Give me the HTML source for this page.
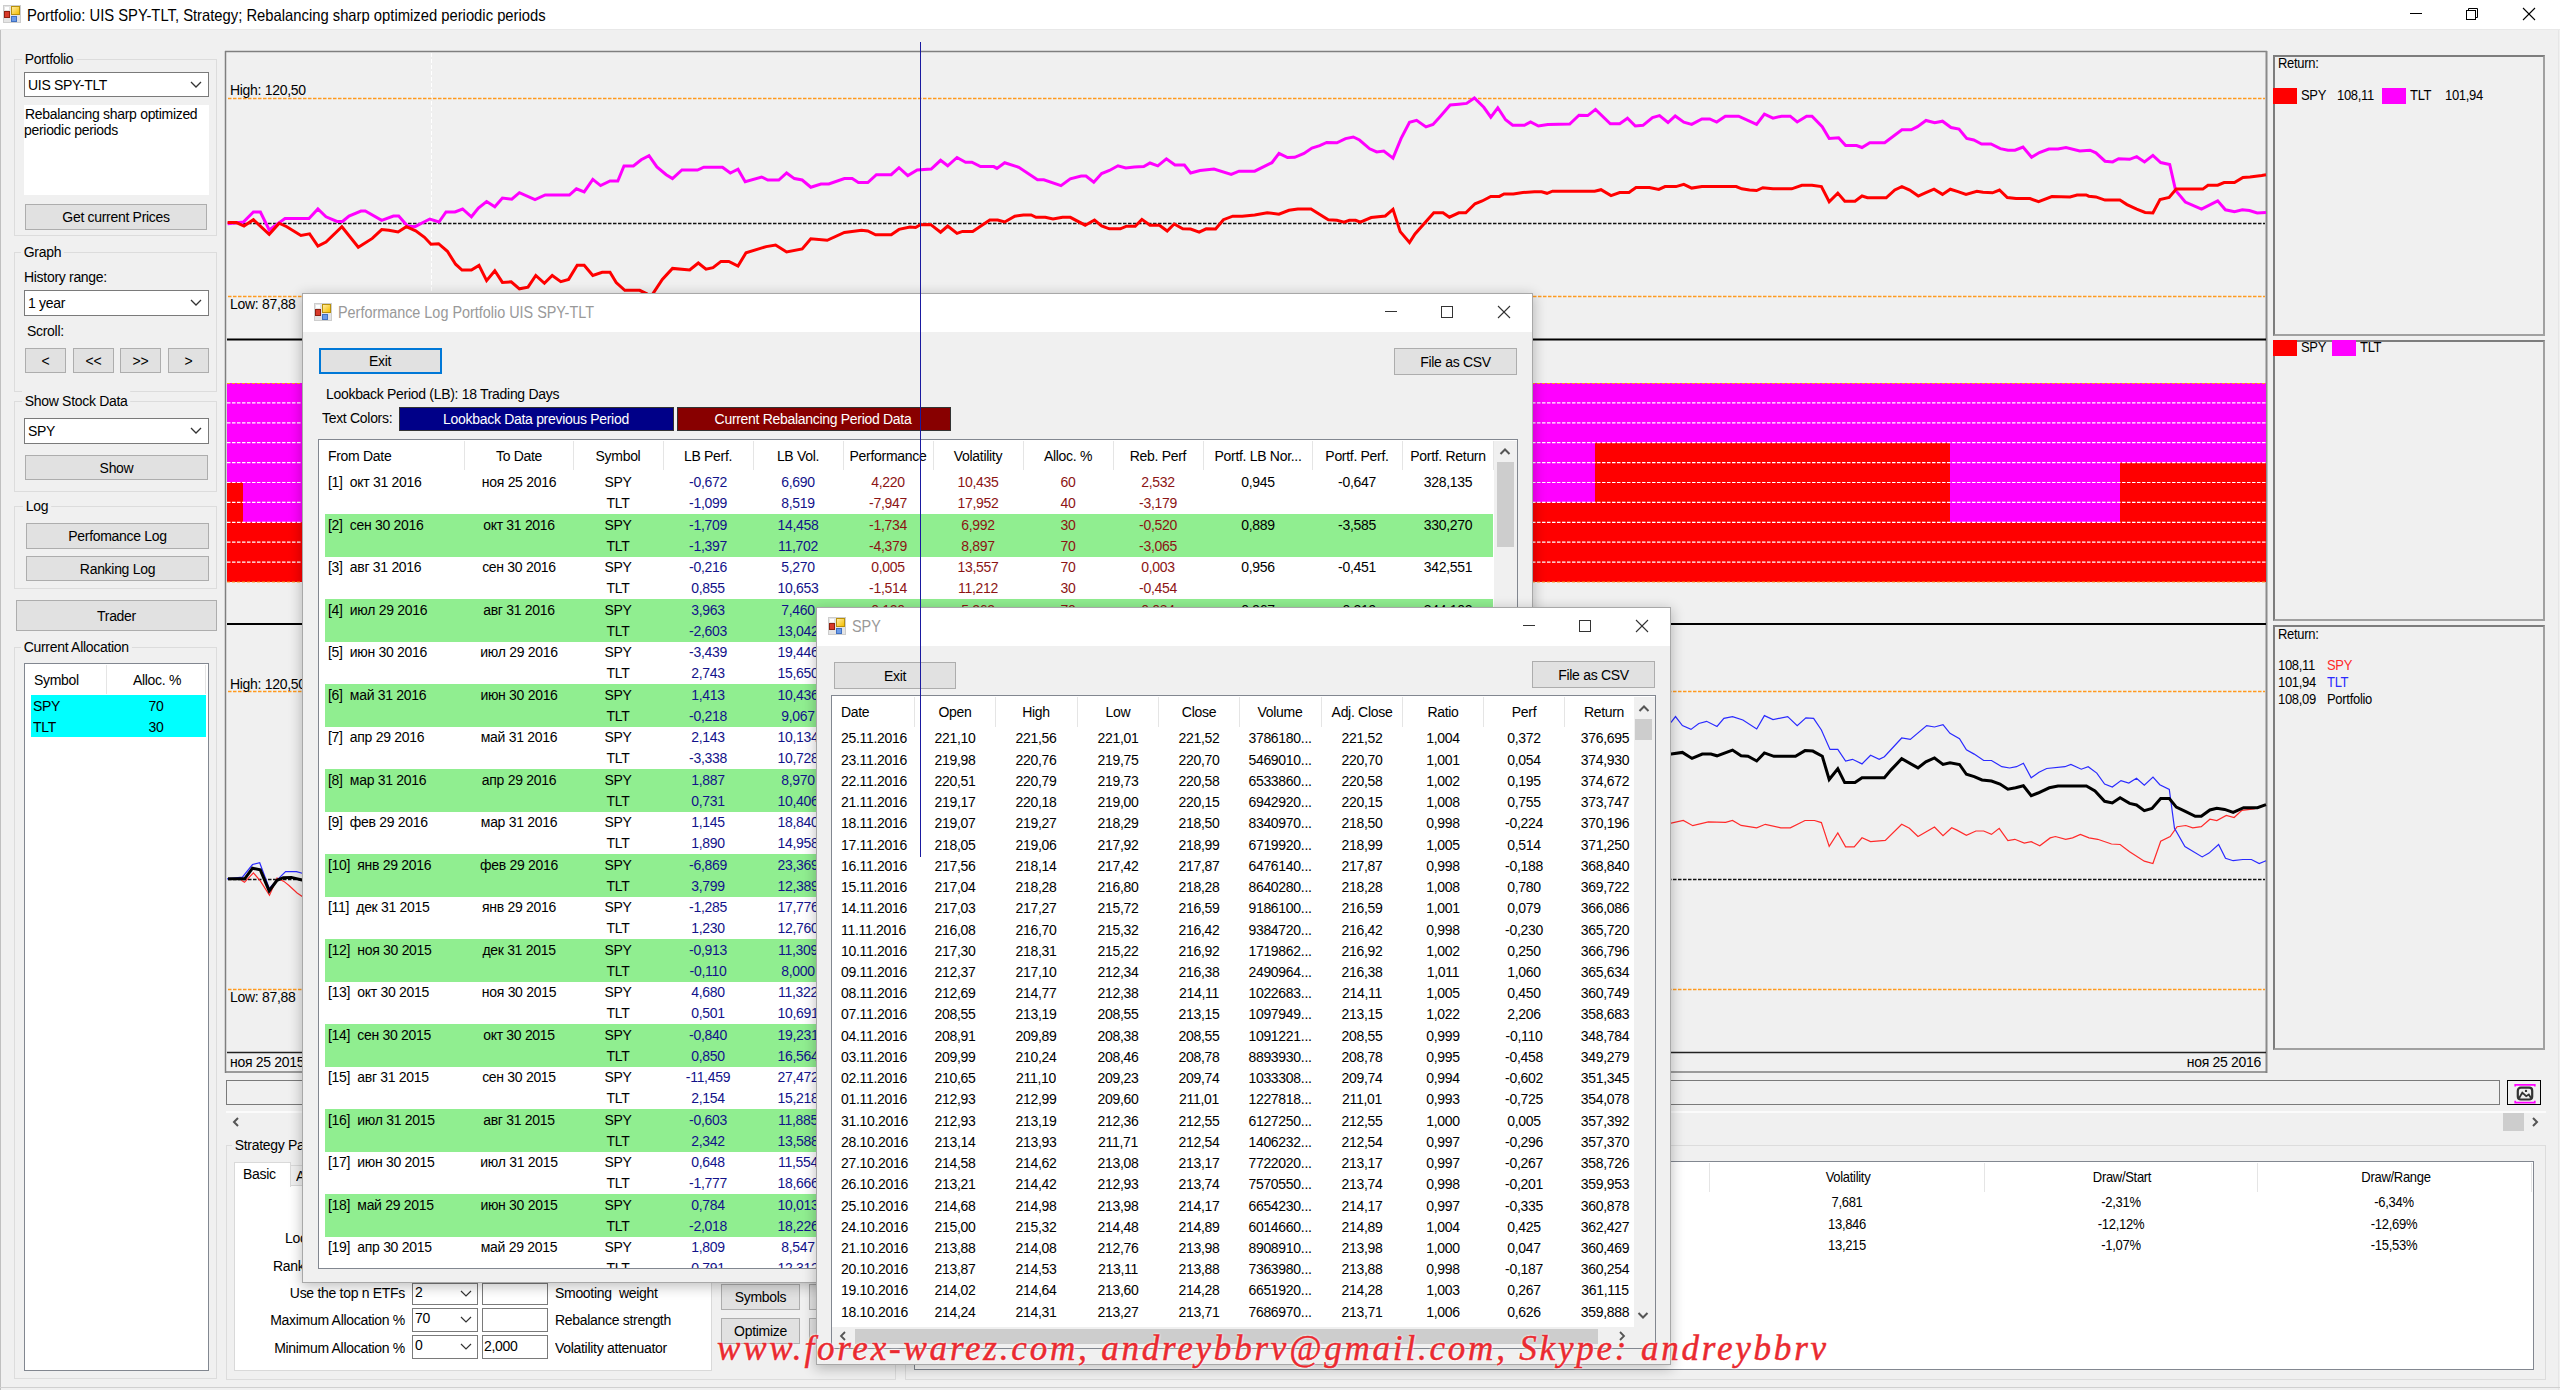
<!DOCTYPE html><html><head><meta charset="utf-8"><style>
html,body{margin:0;padding:0;}
body{width:2560px;height:1390px;overflow:hidden;position:relative;background:#f0f0f0;font-family:'Liberation Sans',sans-serif;font-size:14px;color:#000;}
.a{position:absolute;}
.t{position:absolute;white-space:pre;}
</style></head><body>
<div class="a" style="left:0px;top:0px;width:2560px;height:29px;background:#fff;"></div>
<div class="a" style="left:0px;top:29px;width:2560px;height:1px;background:#e8e8e8;"></div>
<div class="a" style="left:3px;top:5px;width:18px;height:18px;background:#e4e4e4;border:1px solid #cdcdcd;box-sizing:border-box;"></div>
<div class="a" style="left:5px;top:7px;width:4px;height:3px;background:#fff;"></div>
<div class="a" style="left:11px;top:6px;width:9px;height:9px;background:linear-gradient(135deg,#ffeaa0,#f5c000);border:1px solid #b8900a;box-sizing:border-box;"></div>
<div class="a" style="left:4px;top:11px;width:6px;height:7px;background:#d83a2a;border:1px solid #902010;box-sizing:border-box;"></div>
<div class="a" style="left:11px;top:16px;width:6px;height:6px;background:#6a9ae8;border:1px solid #4070c0;box-sizing:border-box;"></div>
<div class="t" style="top:4.8px;line-height:20px;font-size:16.28px;color:#000;letter-spacing:0.00px;left:27.0px;transform:scaleX(0.9091);transform-origin:left center;">Portfolio: UIS SPY-TLT, Strategy; Rebalancing sharp optimized periodic periods</div>
<svg class="a" style="left:2400px;top:0px" width="160" height="30"><line x1="10" y1="13.5" x2="22" y2="13.5" stroke="#000" stroke-width="1"/><rect x="66.5" y="10.5" width="9" height="9" fill="none" stroke="#000" stroke-width="1"/><polyline points="68.5,10.5 68.5,8.5 77.5,8.5 77.5,17.5 75.5,17.5" fill="none" stroke="#000" stroke-width="1"/><line x1="123" y1="8" x2="135" y2="20" stroke="#000" stroke-width="1.1"/><line x1="135" y1="8" x2="123" y2="20" stroke="#000" stroke-width="1.1"/></svg>
<div class="a" style="left:0px;top:30px;width:1px;height:1360px;background:#c0c0c0;"></div>
<div class="a" style="left:2558px;top:30px;width:1px;height:1360px;background:#e6e6e6;"></div>
<div class="a" style="left:0px;top:1387px;width:2560px;height:1px;background:#d0d0d0;"></div>
<div class="a" style="left:14px;top:59px;width:203px;height:177px;border:1px solid #dcdcdc;box-sizing:border-box;"></div>
<div class="t" style="top:49.3px;line-height:19px;font-size:15.40px;color:#000;letter-spacing:-0.33px;left:22.0px;transform:scaleX(0.9091);transform-origin:left center;background:#f0f0f0;padding:0 3px;">Portfolio</div>
<div class="a" style="left:24px;top:72px;width:185px;height:25px;background:#fff;border:1px solid #7a7a7a;box-sizing:border-box;"></div>
<div class="t" style="top:74.8px;line-height:19px;font-size:15.40px;color:#000;letter-spacing:-0.33px;left:28.0px;transform:scaleX(0.9091);transform-origin:left center;">UIS SPY-TLT</div>
<svg class="a" style="left:189px;top:79.5px" width="14" height="10"><polyline points="2,2 7,7 12,2" fill="none" stroke="#333" stroke-width="1.3"/></svg>
<div class="a" style="left:24px;top:105px;width:185px;height:90px;background:#fff;"></div>
<div class="t" style="top:104.3px;line-height:19px;font-size:15.40px;color:#000;letter-spacing:-0.33px;left:25.0px;transform:scaleX(0.9091);transform-origin:left center;">Rebalancing sharp optimized</div>
<div class="t" style="top:120.3px;line-height:19px;font-size:15.40px;color:#000;letter-spacing:-0.33px;left:24.0px;transform:scaleX(0.9091);transform-origin:left center;">periodic periods</div>
<div class="a" style="left:25px;top:204px;width:182px;height:26px;background:#e1e1e1;border:1px solid #adadad;box-sizing:border-box;"></div>
<div class="t" style="top:207.3px;line-height:19px;font-size:15.40px;color:#000;letter-spacing:-0.33px;left:5.0px;width:222px;text-align:center;transform:scaleX(0.9091);transform-origin:center center;">Get current Prices</div>
<div class="a" style="left:14px;top:252px;width:203px;height:140px;border:1px solid #dcdcdc;box-sizing:border-box;"></div>
<div class="t" style="top:242.3px;line-height:19px;font-size:15.40px;color:#000;letter-spacing:-0.33px;left:21.0px;transform:scaleX(0.9091);transform-origin:left center;background:#f0f0f0;padding:0 3px;">Graph</div>
<div class="t" style="top:267.3px;line-height:19px;font-size:15.40px;color:#000;letter-spacing:-0.33px;left:24.0px;transform:scaleX(0.9091);transform-origin:left center;">History range:</div>
<div class="a" style="left:24px;top:290px;width:185px;height:26px;background:#fff;border:1px solid #7a7a7a;box-sizing:border-box;"></div>
<div class="t" style="top:293.3px;line-height:19px;font-size:15.40px;color:#000;letter-spacing:-0.33px;left:28.0px;transform:scaleX(0.9091);transform-origin:left center;">1 year</div>
<svg class="a" style="left:189px;top:298.0px" width="14" height="10"><polyline points="2,2 7,7 12,2" fill="none" stroke="#333" stroke-width="1.3"/></svg>
<div class="t" style="top:321.3px;line-height:19px;font-size:15.40px;color:#000;letter-spacing:-0.33px;left:27.0px;transform:scaleX(0.9091);transform-origin:left center;">Scroll:</div>
<div class="a" style="left:25px;top:348px;width:41px;height:25px;background:#e1e1e1;border:1px solid #adadad;box-sizing:border-box;"></div>
<div class="t" style="top:350.8px;line-height:19px;font-size:15.40px;color:#000;letter-spacing:-0.33px;left:5.0px;width:81px;text-align:center;transform:scaleX(0.9091);transform-origin:center center;">&lt;</div>
<div class="a" style="left:73px;top:348px;width:41px;height:25px;background:#e1e1e1;border:1px solid #adadad;box-sizing:border-box;"></div>
<div class="t" style="top:350.8px;line-height:19px;font-size:15.40px;color:#000;letter-spacing:-0.33px;left:53.0px;width:81px;text-align:center;transform:scaleX(0.9091);transform-origin:center center;">&lt;&lt;</div>
<div class="a" style="left:120px;top:348px;width:41px;height:25px;background:#e1e1e1;border:1px solid #adadad;box-sizing:border-box;"></div>
<div class="t" style="top:350.8px;line-height:19px;font-size:15.40px;color:#000;letter-spacing:-0.33px;left:100.0px;width:81px;text-align:center;transform:scaleX(0.9091);transform-origin:center center;">&gt;&gt;</div>
<div class="a" style="left:168px;top:348px;width:41px;height:25px;background:#e1e1e1;border:1px solid #adadad;box-sizing:border-box;"></div>
<div class="t" style="top:350.8px;line-height:19px;font-size:15.40px;color:#000;letter-spacing:-0.33px;left:148.0px;width:81px;text-align:center;transform:scaleX(0.9091);transform-origin:center center;">&gt;</div>
<div class="a" style="left:14px;top:401px;width:203px;height:91px;border:1px solid #dcdcdc;box-sizing:border-box;"></div>
<div class="t" style="top:391.3px;line-height:19px;font-size:15.40px;color:#000;letter-spacing:-0.33px;left:22.0px;transform:scaleX(0.9091);transform-origin:left center;background:#f0f0f0;padding:0 3px;">Show Stock Data</div>
<div class="a" style="left:24px;top:418px;width:185px;height:26px;background:#fff;border:1px solid #7a7a7a;box-sizing:border-box;"></div>
<div class="t" style="top:421.3px;line-height:19px;font-size:15.40px;color:#000;letter-spacing:-0.33px;left:28.0px;transform:scaleX(0.9091);transform-origin:left center;">SPY</div>
<svg class="a" style="left:189px;top:426.0px" width="14" height="10"><polyline points="2,2 7,7 12,2" fill="none" stroke="#333" stroke-width="1.3"/></svg>
<div class="a" style="left:25px;top:455px;width:183px;height:25px;background:#e1e1e1;border:1px solid #adadad;box-sizing:border-box;"></div>
<div class="t" style="top:457.8px;line-height:19px;font-size:15.40px;color:#000;letter-spacing:-0.33px;left:5.0px;width:223px;text-align:center;transform:scaleX(0.9091);transform-origin:center center;">Show</div>
<div class="a" style="left:14px;top:506px;width:203px;height:83px;border:1px solid #dcdcdc;box-sizing:border-box;"></div>
<div class="t" style="top:496.3px;line-height:19px;font-size:15.40px;color:#000;letter-spacing:-0.33px;left:23.0px;transform:scaleX(0.9091);transform-origin:left center;background:#f0f0f0;padding:0 3px;">Log</div>
<div class="a" style="left:26px;top:523px;width:183px;height:26px;background:#e1e1e1;border:1px solid #adadad;box-sizing:border-box;"></div>
<div class="t" style="top:526.3px;line-height:19px;font-size:15.40px;color:#000;letter-spacing:-0.33px;left:6.0px;width:223px;text-align:center;transform:scaleX(0.9091);transform-origin:center center;">Perfomance Log</div>
<div class="a" style="left:26px;top:556px;width:183px;height:25px;background:#e1e1e1;border:1px solid #adadad;box-sizing:border-box;"></div>
<div class="t" style="top:558.8px;line-height:19px;font-size:15.40px;color:#000;letter-spacing:-0.33px;left:6.0px;width:223px;text-align:center;transform:scaleX(0.9091);transform-origin:center center;">Ranking Log</div>
<div class="a" style="left:16px;top:600px;width:201px;height:31px;background:#e1e1e1;border:1px solid #adadad;box-sizing:border-box;"></div>
<div class="t" style="top:605.8px;line-height:19px;font-size:15.40px;color:#000;letter-spacing:-0.33px;left:-4.0px;width:241px;text-align:center;transform:scaleX(0.9091);transform-origin:center center;">Trader</div>
<div class="a" style="left:14px;top:647px;width:203px;height:732px;border:1px solid #dcdcdc;box-sizing:border-box;"></div>
<div class="t" style="top:637.3px;line-height:19px;font-size:15.40px;color:#000;letter-spacing:-0.33px;left:21.0px;transform:scaleX(0.9091);transform-origin:left center;background:#f0f0f0;padding:0 3px;">Current Allocation</div>
<div class="a" style="left:24px;top:663px;width:185px;height:708px;background:#fff;border:1px solid #828790;box-sizing:border-box;"></div>
<div class="a" style="left:106px;top:665px;width:1px;height:29px;background:#e5e5e5;"></div>
<div class="a" style="left:205px;top:665px;width:1px;height:29px;background:#e5e5e5;"></div>
<div class="t" style="top:670.3px;line-height:19px;font-size:15.40px;color:#000;letter-spacing:-0.33px;left:34.0px;transform:scaleX(0.9091);transform-origin:left center;">Symbol</div>
<div class="t" style="top:670.3px;line-height:19px;font-size:15.40px;color:#000;letter-spacing:-0.33px;left:107.0px;width:100px;text-align:center;transform:scaleX(0.9091);transform-origin:center center;">Alloc. %</div>
<div class="a" style="left:31px;top:695px;width:175px;height:42px;background:#00ffff;"></div>
<div class="t" style="top:696.3px;line-height:19px;font-size:15.40px;color:#000;letter-spacing:-0.33px;left:33.0px;transform:scaleX(0.9091);transform-origin:left center;">SPY</div>
<div class="t" style="top:696.3px;line-height:19px;font-size:15.40px;color:#000;letter-spacing:-0.33px;left:126.0px;width:60px;text-align:center;transform:scaleX(0.9091);transform-origin:center center;">70</div>
<div class="t" style="top:717.3px;line-height:19px;font-size:15.40px;color:#000;letter-spacing:-0.33px;left:33.0px;transform:scaleX(0.9091);transform-origin:left center;">TLT</div>
<div class="t" style="top:717.3px;line-height:19px;font-size:15.40px;color:#000;letter-spacing:-0.33px;left:126.0px;width:60px;text-align:center;transform:scaleX(0.9091);transform-origin:center center;">30</div>
<svg class="a" style="left:0;top:0" width="2560" height="1390"><rect x="225.5" y="51.5" width="1041" height="0" fill="none"/><line x1="225.5" y1="51" x2="225.5" y2="1073" stroke="#7f7f7f" stroke-width="1.5"/><line x1="225" y1="51.5" x2="2267" y2="51.5" stroke="#7f7f7f" stroke-width="1.5"/><line x1="2266.5" y1="51" x2="2266.5" y2="1073" stroke="#8a8a8a" stroke-width="2"/><line x1="225" y1="1072" x2="2267" y2="1072" stroke="#7f7f7f" stroke-width="1.5"/><line x1="227" y1="339.5" x2="2266" y2="339.5" stroke="#000" stroke-width="2"/><line x1="227" y1="624" x2="2266" y2="624" stroke="#000" stroke-width="2"/><line x1="227" y1="1052.5" x2="2266" y2="1052.5" stroke="#222" stroke-width="1.5"/><line x1="431.5" y1="53" x2="431.5" y2="338" stroke="#ffffff" stroke-width="1" stroke-dasharray="4,2"/><line x1="228" y1="98.5" x2="2265" y2="98.5" stroke="#ff9a1f" stroke-width="1.3" stroke-dasharray="3.5,1.5"/><line x1="228" y1="296.5" x2="2265" y2="296.5" stroke="#ff9a1f" stroke-width="1.3" stroke-dasharray="3.5,1.5"/><line x1="228" y1="223.5" x2="2265" y2="223.5" stroke="#111" stroke-width="1.4" stroke-dasharray="3.5,1.5"/><polyline points="227.6,223.8 243.4,222.0 253.4,212.0 260.4,212.0 269.2,230.0 285.0,218.5 309.0,218.5 317.9,209.0 326.0,216.8 337.0,221.4 342.5,221.4 349.0,216.0 361.0,211.0 365.3,211.0 381.7,220.3 393.4,216.0 398.7,216.0 407.5,226.0 415.0,226.7 429.8,219.0 439.0,222.0 446.0,212.0 455.0,212.0 462.6,209.0 471.4,216.8 478.4,208.0 486.6,201.5 494.8,206.8 502.4,198.0 511.8,199.2 519.4,192.7 535.0,199.7 545.2,195.0 569.4,195.0 576.4,188.8 584.2,191.9 592.8,179.4 600.6,185.6 610.0,181.0 617.8,181.0 624.0,166.0 633.4,166.0 641.2,159.8 649.0,155.6 656.9,166.9 666.2,174.7 672.5,178.6 681.9,170.0 697.5,170.0 703.8,167.2 722.5,167.2 730.3,173.0 738.0,169.2 745.2,181.7 761.6,177.0 767.8,180.0 778.8,180.0 786.6,173.0 794.4,178.6 802.2,180.0 810.8,187.2 821.0,184.0 828.8,184.0 844.4,178.6 852.2,178.6 858.4,182.5 867.8,182.5 876.4,174.7 891.2,174.7 899.0,167.7 907.8,175.6 917.2,170.0 931.2,169.0 940.6,160.3 947.7,165.8 957.0,157.5 965.6,162.2 971.9,162.2 980.5,166.6 993.8,166.6 996.9,168.4 1004.7,162.7 1018.8,167.3 1037.5,179.8 1043.8,179.8 1061.0,185.6 1070.3,178.8 1081.2,176.0 1086.0,176.0 1093.8,182.2 1101.6,173.6 1109.4,170.5 1118.0,165.8 1125.8,168.0 1134.4,166.9 1143.8,166.6 1150.0,163.0 1157.8,165.8 1166.4,158.8 1175.0,165.0 1184.4,165.0 1190.6,173.0 1200.0,170.5 1214.0,169.0 1231.2,174.4 1239.0,171.2 1254.7,171.2 1271.9,162.7 1279.0,153.3 1287.5,157.5 1294.7,157.3 1304.0,153.4 1311.9,148.0 1319.7,145.6 1326.7,142.5 1336.9,142.8 1345.5,138.6 1353.3,137.0 1359.5,140.0 1369.7,148.8 1376.7,151.9 1383.8,151.1 1393.0,158.1 1401.0,138.6 1409.5,122.2 1416.6,120.3 1426.0,126.9 1433.0,124.5 1440.0,116.7 1450.2,105.0 1458.8,104.2 1466.6,103.4 1474.4,98.0 1483.8,107.3 1490.8,117.2 1497.8,107.8 1505.6,119.8 1512.7,125.3 1524.4,125.3 1530.6,121.9 1538.4,126.0 1547.8,124.5 1569.7,124.0 1579.0,115.2 1587.7,115.6 1595.5,109.4 1610.3,123.8 1619.7,123.8 1627.5,118.3 1635.3,126.0 1643.0,125.3 1652.5,117.5 1659.5,115.6 1668.0,122.5 1675.2,116.0 1683.8,122.2 1691.7,124.4 1701.9,118.9 1709.7,118.9 1716.7,122.0 1725.3,116.2 1738.6,116.2 1756.6,124.4 1764.4,114.2 1773.0,118.1 1781.6,116.2 1790.2,116.2 1797.2,122.0 1806.6,116.2 1812.0,116.2 1822.2,126.7 1829.2,138.4 1838.6,137.7 1845.6,145.5 1856.6,145.5 1862.0,147.5 1869.8,142.8 1884.7,142.8 1901.9,129.8 1911.2,129.8 1917.5,126.7 1926.0,120.5 1934.7,122.8 1942.5,121.2 1951.0,127.5 1959.0,129.0 1966.7,138.4 1973.8,140.0 1981.6,144.0 1991.0,144.0 2000.3,148.6 2008.0,150.2 2015.0,150.2 2023.0,147.0 2031.6,157.2 2039.4,152.5 2048.8,149.0 2058.0,149.0 2066.0,147.5 2079.7,150.9 2090.0,150.2 2095.9,152.8 2105.0,161.2 2112.7,161.9 2118.6,158.7 2129.6,159.3 2136.7,156.7 2144.5,161.9 2152.9,155.4 2160.7,162.5 2169.7,164.5 2175.6,190.4 2185.3,202.0 2201.5,209.2 2217.7,200.8 2225.4,209.8 2234.5,211.8 2242.3,209.8 2249.4,210.5 2257.2,213.0 2266.0,212.4" fill="none" stroke="#ff00ff" stroke-width="3" stroke-linejoin="miter"/><polyline points="227.6,222.6 236.4,222.6 244.0,226.0 253.4,219.7 269.2,234.3 279.2,223.2 286.8,226.7 300.9,235.5 309.6,233.8 317.9,246.0 326.0,242.0 341.9,226.7 358.3,247.2 372.3,238.4 381.7,229.6 388.8,230.2 398.1,232.0 406.3,226.7 415.7,230.8 424.5,237.3 431.0,244.3 438.6,243.7 447.4,251.3 455.6,264.2 462.0,270.0 471.4,270.0 479.0,265.4 486.6,280.6 494.8,270.7 502.4,282.4 511.2,281.8 519.4,288.8 528.0,287.2 535.8,275.5 544.4,283.3 552.2,275.5 560.8,281.7 568.6,279.4 577.2,265.3 584.2,265.3 592.8,275.5 602.2,272.3 610.0,272.3 616.2,282.5 624.8,290.3 639.7,290.3 647.5,294.2 652.0,295.0 662.3,279.4 672.5,268.4 689.7,270.0 698.3,263.0 706.0,269.2 713.0,267.7 721.0,261.4 728.8,261.4 738.0,266.0 746.0,252.8 766.2,246.6 775.6,245.0 786.6,252.0 802.2,249.0 810.8,238.8 827.2,240.3 844.4,232.5 861.6,230.2 867.8,231.0 875.6,234.8 891.2,234.8 899.0,229.4 910.0,227.0 915.6,227.5 920.3,224.7 930.5,224.4 940.6,232.2 947.7,226.0 957.0,233.4 962.5,231.4 972.7,231.4 989.8,220.0 997.7,220.0 1004.7,222.0 1014.8,216.2 1023.4,215.0 1031.2,215.0 1036.0,217.3 1045.3,217.3 1053.0,219.0 1062.5,217.3 1070.3,217.3 1085.2,225.2 1094.5,220.0 1101.6,226.0 1109.4,228.8 1120.3,228.8 1126.6,226.2 1135.2,226.2 1141.9,219.4 1150.0,225.2 1159.4,225.2 1167.2,231.0 1174.2,224.0 1182.8,228.8 1190.6,229.0 1199.2,232.2 1206.2,228.8 1215.6,229.0 1223.4,219.7 1232.8,216.2 1242.2,216.2 1254.7,215.0 1267.2,212.7 1278.9,214.2 1289.0,210.3 1297.8,208.9 1311.0,208.9 1328.3,219.8 1336.9,220.3 1344.0,222.2 1349.4,220.3 1355.6,220.3 1360.3,222.2 1371.2,217.5 1385.3,216.0 1393.0,209.4 1400.2,231.6 1409.5,242.5 1415.0,233.9 1433.8,212.8 1443.0,212.8 1449.4,217.2 1458.8,212.8 1465.8,212.8 1475.0,203.8 1482.2,201.0 1490.8,196.4 1499.4,196.4 1504.0,194.0 1513.4,194.0 1522.8,192.5 1534.5,191.7 1541.6,191.7 1547.0,193.3 1552.5,191.2 1594.7,191.2 1601.0,189.7 1611.0,195.6 1619.7,192.5 1629.0,192.5 1636.0,187.5 1649.4,187.5 1658.8,189.4 1665.0,186.6 1676.0,186.6 1683.8,184.4 1691.7,188.1 1701.9,186.6 1736.2,186.6 1741.7,188.8 1749.5,190.0 1756.6,190.5 1762.8,187.7 1773.0,188.8 1791.7,188.8 1801.9,185.3 1812.0,185.3 1821.4,186.6 1829.2,201.7 1837.8,193.1 1844.8,201.2 1855.0,201.2 1862.0,196.0 1867.5,197.8 1886.2,197.8 1894.8,190.0 1901.9,186.6 1909.7,190.0 1918.3,196.0 1925.3,192.8 1934.0,189.2 1942.5,194.4 1950.3,189.2 1958.0,191.6 1966.0,194.4 1976.9,191.2 1983.0,192.3 1992.5,192.8 1999.5,190.0 2007.3,197.5 2016.0,198.6 2030.0,198.6 2038.6,201.7 2051.9,196.6 2070.0,196.9 2077.1,195.0 2086.2,195.0 2088.8,196.2 2095.9,196.9 2105.0,200.1 2119.9,200.1 2127.0,204.6 2136.7,209.2 2145.1,212.4 2152.9,213.0 2160.0,199.5 2169.1,197.5 2176.2,189.1 2202.8,189.1 2208.0,185.2 2217.7,185.2 2224.1,182.6 2234.5,182.6 2242.9,177.4 2250.0,177.0 2261.7,175.5 2266.0,174.8" fill="none" stroke="#ff0000" stroke-width="3" stroke-linejoin="miter"/><rect x="227" y="383" width="2039" height="199" fill="#ff00ff"/><rect x="227" y="482.5" width="16" height="99.5" fill="#ff0000"/><rect x="243" y="522.3" width="757" height="59.7" fill="#ff0000"/><rect x="1000" y="502.4" width="595" height="79.6" fill="#ff0000"/><rect x="1595" y="442.7" width="355" height="139.3" fill="#ff0000"/><rect x="1950" y="522.3" width="170" height="59.7" fill="#ff0000"/><rect x="2120" y="462.6" width="146" height="119.4" fill="#ff0000"/><line x1="227" y1="402.9" x2="2266" y2="402.9" stroke="#ffffff" stroke-width="1.2" stroke-dasharray="3.5,1.5"/><line x1="227" y1="422.8" x2="2266" y2="422.8" stroke="#ffffff" stroke-width="1.2" stroke-dasharray="3.5,1.5"/><line x1="227" y1="442.7" x2="2266" y2="442.7" stroke="#ffffff" stroke-width="1.2" stroke-dasharray="3.5,1.5"/><line x1="227" y1="462.6" x2="2266" y2="462.6" stroke="#ffffff" stroke-width="1.2" stroke-dasharray="3.5,1.5"/><line x1="227" y1="482.5" x2="2266" y2="482.5" stroke="#ffffff" stroke-width="1.2" stroke-dasharray="3.5,1.5"/><line x1="227" y1="502.4" x2="2266" y2="502.4" stroke="#ffffff" stroke-width="1.2" stroke-dasharray="3.5,1.5"/><line x1="227" y1="522.3" x2="2266" y2="522.3" stroke="#ffffff" stroke-width="1.2" stroke-dasharray="3.5,1.5"/><line x1="227" y1="542.2" x2="2266" y2="542.2" stroke="#ffffff" stroke-width="1.2" stroke-dasharray="3.5,1.5"/><line x1="227" y1="562.1" x2="2266" y2="562.1" stroke="#ffffff" stroke-width="1.2" stroke-dasharray="3.5,1.5"/><line x1="227" y1="383.5" x2="2266" y2="383.5" stroke="#ff9a1f" stroke-width="1" stroke-dasharray="3,2"/><line x1="227" y1="582" x2="2266" y2="582" stroke="#ff9a1f" stroke-width="1" stroke-dasharray="3,2"/><line x1="228" y1="691.5" x2="2265" y2="691.5" stroke="#ff9a1f" stroke-width="1.3" stroke-dasharray="3.5,1.5"/><line x1="228" y1="989.5" x2="2265" y2="989.5" stroke="#ff9a1f" stroke-width="1.3" stroke-dasharray="3.5,1.5"/><line x1="228" y1="879.5" x2="2265" y2="879.5" stroke="#111" stroke-width="1.4" stroke-dasharray="3.5,1.5"/><polyline points="241.3,880.3 244.5,882.3 253.4,872.8 260.3,880.9 269.5,895.2 277.0,878.0 283.9,881.4 289.0,885.5 297.1,893.0 303.0,897.0 310.0,903.0" fill="none" stroke="#ff2a2a" stroke-width="1.2"/><polyline points="1660.0,823.0 1671.2,823.1 1683.3,820.5 1692.8,825.7 1708.3,821.9 1725.6,822.3 1732.5,820.5 1741.1,825.4 1756.7,827.8 1765.3,824.3 1780.8,827.8 1790.3,827.8 1805.0,820.5 1814.5,820.5 1821.4,822.6 1829.2,846.4 1837.8,833.0 1845.6,846.8 1854.2,846.8 1862.0,837.8 1870.6,841.6 1885.3,840.4 1901.7,824.3 1909.4,828.3 1918.0,836.4 1934.5,827.1 1943.0,835.7 1951.7,827.8 1956.9,830.1 1966.4,835.3 1975.9,831.0 1983.7,831.0 1991.5,834.4 1999.2,828.4 2007.9,840.5 2014.8,839.3 2024.3,843.1 2031.2,841.7 2039.8,845.7 2050.2,837.9 2055.4,836.5 2065.7,839.3 2072.6,837.9 2080.4,834.4 2089.0,837.9 2097.7,839.3 2111.5,844.0 2120.1,844.5 2129.6,851.7 2144.3,861.2 2152.9,863.5 2160.7,841.3 2170.2,836.5 2177.1,826.7 2185.8,825.5 2192.7,827.9 2201.3,826.7 2209.9,819.2 2216.8,820.6 2226.3,815.4 2234.1,817.5 2241.9,810.3 2254.0,808.9 2266.0,805.0" fill="none" stroke="#ff2a2a" stroke-width="1.2"/><polyline points="227.0,878.8 242.4,877.1 252.5,864.5 259.7,862.7 269.2,888.3 278.7,878.3 285.6,871.6 296.5,871.6 303.0,873.5 310.0,872.0" fill="none" stroke="#2a2aff" stroke-width="1.2"/><polyline points="1660.0,722.0 1671.2,722.1 1675.5,716.6 1682.4,725.6 1691.0,729.4 1698.8,723.5 1706.6,721.3 1717.0,726.5 1723.9,718.3 1732.5,716.6 1742.9,720.0 1756.7,729.0 1764.4,715.6 1773.0,719.6 1787.7,716.6 1797.2,725.6 1805.9,717.8 1813.6,718.3 1821.4,730.0 1830.0,749.4 1837.8,749.4 1845.6,761.0 1852.5,759.3 1862.0,763.9 1870.6,755.3 1879.2,759.3 1884.4,756.7 1901.7,738.0 1910.3,739.4 1926.7,725.6 1934.5,727.0 1943.0,724.7 1950.0,733.4 1959.5,738.6 1966.4,749.8 1974.2,754.1 1983.7,760.5 1991.5,760.5 2001.8,766.7 2009.6,768.0 2016.5,766.7 2023.4,763.3 2031.2,777.8 2039.0,772.3 2046.7,768.5 2064.9,766.7 2070.9,764.5 2081.3,769.2 2088.2,766.7 2096.8,773.1 2104.6,784.0 2112.3,787.0 2121.0,780.6 2128.8,783.0 2136.5,778.3 2144.3,785.2 2153.0,777.1 2159.8,784.7 2169.3,789.5 2174.5,828.4 2184.9,846.5 2202.2,856.9 2209.0,853.1 2218.6,844.5 2225.5,858.3 2233.2,860.7 2242.7,859.5 2251.4,859.5 2259.2,863.5 2266.0,860.7" fill="none" stroke="#2a2aff" stroke-width="1.2"/><polyline points="228.0,878.8 244.7,878.8 252.5,868.2 260.3,869.9 269.2,890.9 277.0,880.3 283.3,877.7 291.3,877.4 303.0,880.3 310.0,881.0" fill="none" stroke="#000" stroke-width="3"/><polyline points="1660.0,754.0 1671.2,754.0 1682.4,752.4 1692.0,758.4 1702.3,754.0 1710.9,754.0 1717.0,755.8 1732.5,750.1 1741.1,755.8 1748.0,756.3 1756.7,761.0 1764.4,752.9 1773.9,756.3 1795.5,756.3 1805.0,750.6 1812.8,751.1 1822.3,756.3 1829.2,779.5 1837.8,768.8 1844.7,782.6 1855.0,782.6 1862.0,777.7 1884.4,777.7 1891.3,769.6 1901.7,758.7 1918.0,767.9 1925.8,761.8 1934.5,758.0 1943.0,764.4 1950.0,762.8 1959.5,764.5 1966.4,774.3 1974.2,776.6 1982.0,780.0 1991.5,781.0 2000.0,784.0 2007.9,789.2 2015.6,787.8 2023.4,785.7 2031.2,795.6 2038.0,793.0 2049.3,787.8 2058.0,786.0 2086.4,786.0 2095.0,790.9 2104.6,801.3 2112.3,803.0 2120.1,797.8 2129.6,803.4 2136.5,805.0 2144.3,810.6 2152.0,808.5 2160.7,798.5 2169.3,798.5 2176.3,807.1 2185.8,811.6 2195.3,816.3 2201.3,816.3 2209.9,810.0 2216.8,808.2 2224.6,809.4 2233.2,812.3 2243.6,807.7 2257.4,807.7 2266.0,804.7" fill="none" stroke="#000" stroke-width="3"/></svg>
<div class="t" style="top:80.3px;line-height:19px;font-size:15.40px;color:#000;letter-spacing:-0.33px;left:230.0px;transform:scaleX(0.9091);transform-origin:left center;">High: 120,50</div>
<div class="t" style="top:294.3px;line-height:19px;font-size:15.40px;color:#000;letter-spacing:-0.33px;left:230.0px;transform:scaleX(0.9091);transform-origin:left center;">Low: 87,88</div>
<div class="t" style="top:674.3px;line-height:19px;font-size:15.40px;color:#000;letter-spacing:-0.33px;left:230.0px;transform:scaleX(0.9091);transform-origin:left center;">High: 120,50</div>
<div class="t" style="top:987.3px;line-height:19px;font-size:15.40px;color:#000;letter-spacing:-0.33px;left:230.0px;transform:scaleX(0.9091);transform-origin:left center;">Low: 87,88</div>
<div class="t" style="top:1052.3px;line-height:19px;font-size:15.40px;color:#000;letter-spacing:-0.33px;left:230.0px;transform:scaleX(0.9091);transform-origin:left center;">ноя 25 2015</div>
<div class="t" style="top:1052.3px;line-height:19px;font-size:15.40px;color:#000;letter-spacing:-0.33px;left:2061.0px;width:200px;text-align:right;transform:scaleX(0.9091);transform-origin:right center;">ноя 25 2016</div>
<div class="a" style="left:2273px;top:55px;width:272px;height:281px;border:2px solid #7d7d7d;box-sizing:border-box;border-right-color:#a0a0a0;border-bottom-color:#a0a0a0;"></div>
<div class="t" style="top:55.3px;line-height:17px;font-size:14.30px;color:#000;letter-spacing:-0.33px;left:2278.0px;transform:scaleX(0.9091);transform-origin:left center;">Return:</div>
<div class="a" style="left:2273px;top:88px;width:24px;height:16px;background:#ff0000;"></div>
<div class="t" style="top:87.3px;line-height:17px;font-size:14.30px;color:#000;letter-spacing:-0.33px;left:2301.0px;transform:scaleX(0.9091);transform-origin:left center;">SPY</div>
<div class="t" style="top:87.3px;line-height:17px;font-size:14.30px;color:#000;letter-spacing:-0.33px;left:2337.0px;transform:scaleX(0.9091);transform-origin:left center;">108,11</div>
<div class="a" style="left:2382px;top:88px;width:24px;height:16px;background:#ff00ff;"></div>
<div class="t" style="top:87.3px;line-height:17px;font-size:14.30px;color:#000;letter-spacing:-0.33px;left:2410.0px;transform:scaleX(0.9091);transform-origin:left center;">TLT</div>
<div class="t" style="top:87.3px;line-height:17px;font-size:14.30px;color:#000;letter-spacing:-0.33px;left:2445.0px;transform:scaleX(0.9091);transform-origin:left center;">101,94</div>
<div class="a" style="left:2273px;top:340px;width:272px;height:281px;border:2px solid #7d7d7d;box-sizing:border-box;border-right-color:#a0a0a0;border-bottom-color:#a0a0a0;"></div>
<div class="a" style="left:2273px;top:340px;width:24px;height:16px;background:#ff0000;"></div>
<div class="t" style="top:339.3px;line-height:17px;font-size:14.30px;color:#000;letter-spacing:-0.33px;left:2301.0px;transform:scaleX(0.9091);transform-origin:left center;">SPY</div>
<div class="a" style="left:2332px;top:340px;width:24px;height:16px;background:#ff00ff;"></div>
<div class="t" style="top:339.3px;line-height:17px;font-size:14.30px;color:#000;letter-spacing:-0.33px;left:2360.0px;transform:scaleX(0.9091);transform-origin:left center;">TLT</div>
<div class="a" style="left:2273px;top:625px;width:272px;height:425px;border:2px solid #7d7d7d;box-sizing:border-box;border-right-color:#a0a0a0;border-bottom-color:#a0a0a0;"></div>
<div class="t" style="top:626.3px;line-height:17px;font-size:14.30px;color:#000;letter-spacing:-0.33px;left:2278.0px;transform:scaleX(0.9091);transform-origin:left center;">Return:</div>
<div class="t" style="top:657.3px;line-height:17px;font-size:14.30px;color:#000;letter-spacing:-0.33px;left:2278.0px;transform:scaleX(0.9091);transform-origin:left center;">108,11</div>
<div class="t" style="top:657.3px;line-height:17px;font-size:14.30px;color:#ff2a2a;letter-spacing:-0.33px;left:2327.0px;transform:scaleX(0.9091);transform-origin:left center;">SPY</div>
<div class="t" style="top:674.3px;line-height:17px;font-size:14.30px;color:#000;letter-spacing:-0.33px;left:2278.0px;transform:scaleX(0.9091);transform-origin:left center;">101,94</div>
<div class="t" style="top:674.3px;line-height:17px;font-size:14.30px;color:#2a2aff;letter-spacing:-0.33px;left:2327.0px;transform:scaleX(0.9091);transform-origin:left center;">TLT</div>
<div class="t" style="top:691.3px;line-height:17px;font-size:14.30px;color:#000;letter-spacing:-0.33px;left:2278.0px;transform:scaleX(0.9091);transform-origin:left center;">108,09</div>
<div class="t" style="top:691.3px;line-height:17px;font-size:14.30px;color:#000;letter-spacing:-0.33px;left:2327.0px;transform:scaleX(0.9091);transform-origin:left center;">Portfolio</div>
<div class="a" style="left:226px;top:1080px;width:2274px;height:25px;border:1px solid #7a7a7a;box-sizing:border-box;background:#f0f0f0;"></div>
<div class="a" style="left:2507px;top:1080px;width:34px;height:25px;border:1px solid #000;box-sizing:border-box;background:#f0f0f0;"></div>
<svg class="a" style="left:2513px;top:1083px" width="24" height="22"><polyline points="2.2,3.6 2.2,1.8 21.8,1.8 21.8,3.6" fill="none" stroke="#ff00ff" stroke-width="1.7"/><polyline points="2.2,17.8 2.2,19.6 21.8,19.6 21.8,17.8" fill="none" stroke="#ff00ff" stroke-width="1.7"/><rect x="4.8" y="4.7" width="14.4" height="11.8" rx="3" fill="none" stroke="#333" stroke-width="2.2"/><polyline points="6.2,15 9.3,9.6 13.2,13.2 15.8,11.6 18,15" fill="none" stroke="#333" stroke-width="1.8"/><circle cx="13" cy="7.9" r="1.2" fill="#333"/></svg>
<div class="a" style="left:226px;top:1111px;width:2320px;height:2px;background:#fbfbfb;"></div>
<svg class="a" style="left:229px;top:1115px" width="14" height="14"><polyline points="9,3 5,7 9,11" fill="none" stroke="#555" stroke-width="2"/></svg>
<div class="a" style="left:2503px;top:1113px;width:21px;height:18px;background:#cdcdcd;"></div>
<svg class="a" style="left:2528px;top:1115px" width="14" height="14"><polyline points="5,3 9,7 5,11" fill="none" stroke="#555" stroke-width="2"/></svg>
<div class="a" style="left:226px;top:1145px;width:670px;height:235px;border:1px solid #dcdcdc;box-sizing:border-box;"></div>
<div class="t" style="top:1135.3px;line-height:19px;font-size:15.40px;color:#000;letter-spacing:-0.33px;left:232.0px;transform:scaleX(0.9091);transform-origin:left center;background:#f0f0f0;padding:0 3px;">Strategy Parameters</div>
<div class="a" style="left:905px;top:1145px;width:1641px;height:235px;border:1px solid #dcdcdc;box-sizing:border-box;"></div>
<div class="a" style="left:914px;top:1161px;width:1620px;height:209px;background:#fff;border:1px solid #828790;box-sizing:border-box;"></div>
<div class="a" style="left:1709px;top:1163px;width:1px;height:29px;background:#e5e5e5;"></div>
<div class="a" style="left:1984px;top:1163px;width:1px;height:29px;background:#e5e5e5;"></div>
<div class="a" style="left:2257px;top:1163px;width:1px;height:29px;background:#e5e5e5;"></div>
<div class="a" style="left:2531px;top:1163px;width:1px;height:29px;background:#e5e5e5;"></div>
<div class="t" style="top:1169.3px;line-height:17px;font-size:14.30px;color:#000;letter-spacing:-0.33px;left:1748.0px;width:200px;text-align:center;transform:scaleX(0.9091);transform-origin:center center;">Volatility</div>
<div class="t" style="top:1169.3px;line-height:17px;font-size:14.30px;color:#000;letter-spacing:-0.33px;left:2022.0px;width:200px;text-align:center;transform:scaleX(0.9091);transform-origin:center center;">Draw/Start</div>
<div class="t" style="top:1169.3px;line-height:17px;font-size:14.30px;color:#000;letter-spacing:-0.33px;left:2296.0px;width:200px;text-align:center;transform:scaleX(0.9091);transform-origin:center center;">Draw/Range</div>
<div class="t" style="top:1194.3px;line-height:17px;font-size:14.30px;color:#000;letter-spacing:-0.33px;left:1747.0px;width:200px;text-align:center;transform:scaleX(0.9091);transform-origin:center center;">7,681</div>
<div class="t" style="top:1194.3px;line-height:17px;font-size:14.30px;color:#000;letter-spacing:-0.33px;left:2021.0px;width:200px;text-align:center;transform:scaleX(0.9091);transform-origin:center center;">-2,31%</div>
<div class="t" style="top:1194.3px;line-height:17px;font-size:14.30px;color:#000;letter-spacing:-0.33px;left:2294.0px;width:200px;text-align:center;transform:scaleX(0.9091);transform-origin:center center;">-6,34%</div>
<div class="t" style="top:1215.8px;line-height:17px;font-size:14.30px;color:#000;letter-spacing:-0.33px;left:1747.0px;width:200px;text-align:center;transform:scaleX(0.9091);transform-origin:center center;">13,846</div>
<div class="t" style="top:1215.8px;line-height:17px;font-size:14.30px;color:#000;letter-spacing:-0.33px;left:2021.0px;width:200px;text-align:center;transform:scaleX(0.9091);transform-origin:center center;">-12,12%</div>
<div class="t" style="top:1215.8px;line-height:17px;font-size:14.30px;color:#000;letter-spacing:-0.33px;left:2294.0px;width:200px;text-align:center;transform:scaleX(0.9091);transform-origin:center center;">-12,69%</div>
<div class="t" style="top:1237.3px;line-height:17px;font-size:14.30px;color:#000;letter-spacing:-0.33px;left:1747.0px;width:200px;text-align:center;transform:scaleX(0.9091);transform-origin:center center;">13,215</div>
<div class="t" style="top:1237.3px;line-height:17px;font-size:14.30px;color:#000;letter-spacing:-0.33px;left:2021.0px;width:200px;text-align:center;transform:scaleX(0.9091);transform-origin:center center;">-1,07%</div>
<div class="t" style="top:1237.3px;line-height:17px;font-size:14.30px;color:#000;letter-spacing:-0.33px;left:2294.0px;width:200px;text-align:center;transform:scaleX(0.9091);transform-origin:center center;">-15,53%</div>
<div class="a" style="left:234px;top:1185px;width:478px;height:186px;background:#fff;border:1px solid #d9d9d9;box-sizing:border-box;"></div>
<div class="a" style="left:290px;top:1165px;width:50px;height:21px;background:#f0f0f0;border:1px solid #d9d9d9;box-sizing:border-box;"></div>
<div class="a" style="left:234px;top:1162px;width:57px;height:25px;background:#fff;border:1px solid #d9d9d9;border-bottom:none;box-sizing:border-box;"></div>
<div class="t" style="top:1164.3px;line-height:19px;font-size:15.40px;color:#000;letter-spacing:-0.33px;left:243.0px;transform:scaleX(0.9091);transform-origin:left center;">Basic</div>
<div class="t" style="top:1166.3px;line-height:19px;font-size:15.40px;color:#000;letter-spacing:-0.33px;left:296.0px;transform:scaleX(0.9091);transform-origin:left center;">Advanced</div>
<div class="t" style="top:1228.3px;line-height:19px;font-size:15.40px;color:#000;letter-spacing:-0.33px;left:285.0px;transform:scaleX(0.9091);transform-origin:left center;">Lookback Period</div>
<div class="t" style="top:1256.3px;line-height:19px;font-size:15.40px;color:#000;letter-spacing:-0.33px;left:273.0px;transform:scaleX(0.9091);transform-origin:left center;">Ranking Method</div>
<div class="t" style="top:1283.3px;line-height:19px;font-size:15.40px;color:#000;letter-spacing:-0.33px;left:205.0px;width:200px;text-align:right;transform:scaleX(0.9091);transform-origin:right center;">Use the top n ETFs</div>
<div class="t" style="top:1310.3px;line-height:19px;font-size:15.40px;color:#000;letter-spacing:-0.33px;left:205.0px;width:200px;text-align:right;transform:scaleX(0.9091);transform-origin:right center;">Maximum Allocation %</div>
<div class="t" style="top:1338.3px;line-height:19px;font-size:15.40px;color:#000;letter-spacing:-0.33px;left:205.0px;width:200px;text-align:right;transform:scaleX(0.9091);transform-origin:right center;">Minimum Allocation %</div>
<div class="a" style="left:412px;top:1283px;width:66px;height:22px;background:#fff;border:1px solid #7a7a7a;box-sizing:border-box;"></div>
<div class="t" style="top:1282.3px;line-height:19px;font-size:15.40px;color:#000;letter-spacing:-0.33px;left:415.0px;transform:scaleX(0.9091);transform-origin:left center;">2</div>
<svg class="a" style="left:460px;top:1290.0px" width="12" height="8"><polyline points="1,1 6,6 11,1" fill="none" stroke="#333" stroke-width="1.2"/></svg>
<div class="a" style="left:482px;top:1283px;width:66px;height:22px;background:#fff;border:1px solid #7a7a7a;box-sizing:border-box;"></div>
<div class="a" style="left:412px;top:1308px;width:66px;height:24px;background:#fff;border:1px solid #7a7a7a;box-sizing:border-box;"></div>
<div class="t" style="top:1308.3px;line-height:19px;font-size:15.40px;color:#000;letter-spacing:-0.33px;left:415.0px;transform:scaleX(0.9091);transform-origin:left center;">70</div>
<svg class="a" style="left:460px;top:1316.0px" width="12" height="8"><polyline points="1,1 6,6 11,1" fill="none" stroke="#333" stroke-width="1.2"/></svg>
<div class="a" style="left:482px;top:1308px;width:66px;height:24px;background:#fff;border:1px solid #7a7a7a;box-sizing:border-box;"></div>
<div class="a" style="left:412px;top:1335px;width:66px;height:24px;background:#fff;border:1px solid #7a7a7a;box-sizing:border-box;"></div>
<div class="t" style="top:1335.3px;line-height:19px;font-size:15.40px;color:#000;letter-spacing:-0.33px;left:415.0px;transform:scaleX(0.9091);transform-origin:left center;">0</div>
<svg class="a" style="left:460px;top:1343.0px" width="12" height="8"><polyline points="1,1 6,6 11,1" fill="none" stroke="#333" stroke-width="1.2"/></svg>
<div class="a" style="left:482px;top:1335px;width:66px;height:24px;background:#fff;border:1px solid #7a7a7a;box-sizing:border-box;"></div>
<div class="t" style="top:1336.3px;line-height:19px;font-size:15.40px;color:#000;letter-spacing:-0.33px;left:484.0px;transform:scaleX(0.9091);transform-origin:left center;">2,000</div>
<div class="t" style="top:1283.3px;line-height:19px;font-size:15.40px;color:#000;letter-spacing:-0.33px;left:555.0px;transform:scaleX(0.9091);transform-origin:left center;">Smooting  weight</div>
<div class="t" style="top:1310.3px;line-height:19px;font-size:15.40px;color:#000;letter-spacing:-0.33px;left:555.0px;transform:scaleX(0.9091);transform-origin:left center;">Rebalance strength</div>
<div class="t" style="top:1338.3px;line-height:19px;font-size:15.40px;color:#000;letter-spacing:-0.33px;left:555.0px;transform:scaleX(0.9091);transform-origin:left center;">Volatility attenuator</div>
<div class="a" style="left:721px;top:1284px;width:79px;height:26px;background:#e1e1e1;border:1px solid #adadad;box-sizing:border-box;"></div>
<div class="t" style="top:1287.3px;line-height:19px;font-size:15.40px;color:#000;letter-spacing:-0.33px;left:701.0px;width:119px;text-align:center;transform:scaleX(0.9091);transform-origin:center center;">Symbols</div>
<div class="a" style="left:721px;top:1318px;width:79px;height:26px;background:#e1e1e1;border:1px solid #adadad;box-sizing:border-box;"></div>
<div class="t" style="top:1321.3px;line-height:19px;font-size:15.40px;color:#000;letter-spacing:-0.33px;left:701.0px;width:119px;text-align:center;transform:scaleX(0.9091);transform-origin:center center;">Optimize</div>
<div class="a" style="left:809px;top:1284px;width:71px;height:26px;background:#e1e1e1;border:1px solid #adadad;box-sizing:border-box;"></div>
<div class="t" style="top:1287.3px;line-height:19px;font-size:15.40px;color:#000;letter-spacing:-0.33px;left:789.0px;width:111px;text-align:center;transform:scaleX(0.9091);transform-origin:center center;">Save</div>
<div class="a" style="left:809px;top:1318px;width:71px;height:26px;background:#e1e1e1;border:1px solid #adadad;box-sizing:border-box;"></div>
<div class="t" style="top:1321.3px;line-height:19px;font-size:15.40px;color:#000;letter-spacing:-0.33px;left:789.0px;width:111px;text-align:center;transform:scaleX(0.9091);transform-origin:center center;">Load</div>
<div class="a" style="left:302px;top:293px;width:1231px;height:990px;background:#f0f0f0;border:1px solid #a8a8a8;box-sizing:border-box;box-shadow:0 3px 12px 1px rgba(0,0,0,0.24);"></div>
<div class="a" style="left:303px;top:294px;width:1229px;height:38px;background:#fff;"></div>
<div class="a" style="left:314px;top:303px;width:18px;height:18px;background:#e4e4e4;border:1px solid #cdcdcd;box-sizing:border-box;"></div>
<div class="a" style="left:316px;top:305px;width:4px;height:3px;background:#fff;"></div>
<div class="a" style="left:322px;top:304px;width:9px;height:9px;background:linear-gradient(135deg,#ffeaa0,#f5c000);border:1px solid #b8900a;box-sizing:border-box;"></div>
<div class="a" style="left:315px;top:309px;width:6px;height:7px;background:#d83a2a;border:1px solid #902010;box-sizing:border-box;"></div>
<div class="a" style="left:322px;top:314px;width:6px;height:6px;background:#6a9ae8;border:1px solid #4070c0;box-sizing:border-box;"></div>
<div class="t" style="top:302.8px;line-height:19px;font-size:15.84px;color:#999;letter-spacing:0.00px;left:338.0px;transform:scaleX(0.9091);transform-origin:left center;">Performance Log Portfolio UIS SPY-TLT</div>
<svg class="a" style="left:1383px;top:293px" width="150" height="38"><line x1="2" y1="18.5" x2="14" y2="18.5" stroke="#333" stroke-width="1"/><rect x="58.5" y="13.5" width="11" height="11" fill="none" stroke="#333" stroke-width="1"/><line x1="115" y1="13" x2="127" y2="25" stroke="#333" stroke-width="1.1"/><line x1="127" y1="13" x2="115" y2="25" stroke="#333" stroke-width="1.1"/></svg>
<div class="a" style="left:319px;top:348px;width:123px;height:26px;background:#e1e1e1;border:2px solid #0078d7;box-sizing:border-box;"></div>
<div class="t" style="top:351.3px;line-height:19px;font-size:15.40px;color:#000;letter-spacing:-0.33px;left:330.0px;width:100px;text-align:center;transform:scaleX(0.9091);transform-origin:center center;">Exit</div>
<div class="a" style="left:1394px;top:348px;width:123px;height:27px;background:#e1e1e1;border:1px solid #adadad;box-sizing:border-box;"></div>
<div class="t" style="top:351.8px;line-height:19px;font-size:15.40px;color:#000;letter-spacing:-0.33px;left:1374.0px;width:163px;text-align:center;transform:scaleX(0.9091);transform-origin:center center;">File as CSV</div>
<div class="t" style="top:384.3px;line-height:19px;font-size:15.40px;color:#000;letter-spacing:-0.33px;left:326.0px;transform:scaleX(0.9091);transform-origin:left center;">Lookback Period (LB): 18 Trading Days</div>
<div class="t" style="top:408.3px;line-height:19px;font-size:15.40px;color:#000;letter-spacing:-0.33px;left:322.0px;transform:scaleX(0.9091);transform-origin:left center;">Text Colors:</div>
<div class="a" style="left:399px;top:407px;width:275px;height:24px;background:#000088;border:1px solid #333;box-sizing:border-box;"></div>
<div class="t" style="top:409.3px;line-height:19px;font-size:15.40px;color:#fff;letter-spacing:-0.33px;left:386.0px;width:300px;text-align:center;transform:scaleX(0.9091);transform-origin:center center;">Lookback Data previous Period</div>
<div class="a" style="left:677px;top:407px;width:274px;height:24px;background:#880000;border:1px solid #333;box-sizing:border-box;"></div>
<div class="t" style="top:409.3px;line-height:19px;font-size:15.40px;color:#fff;letter-spacing:-0.33px;left:663.0px;width:300px;text-align:center;transform:scaleX(0.9091);transform-origin:center center;">Current Rebalancing Period Data</div>
<div class="a" style="left:318px;top:439px;width:1200px;height:830px;background:#fff;border:1px solid #828790;box-sizing:border-box;"></div>
<div class="a" style="left:464px;top:441px;width:1px;height:29px;background:#e5e5e5;"></div>
<div class="a" style="left:573px;top:441px;width:1px;height:29px;background:#e5e5e5;"></div>
<div class="a" style="left:663px;top:441px;width:1px;height:29px;background:#e5e5e5;"></div>
<div class="a" style="left:753px;top:441px;width:1px;height:29px;background:#e5e5e5;"></div>
<div class="a" style="left:843px;top:441px;width:1px;height:29px;background:#e5e5e5;"></div>
<div class="a" style="left:933px;top:441px;width:1px;height:29px;background:#e5e5e5;"></div>
<div class="a" style="left:1023px;top:441px;width:1px;height:29px;background:#e5e5e5;"></div>
<div class="a" style="left:1113px;top:441px;width:1px;height:29px;background:#e5e5e5;"></div>
<div class="a" style="left:1203px;top:441px;width:1px;height:29px;background:#e5e5e5;"></div>
<div class="a" style="left:1312px;top:441px;width:1px;height:29px;background:#e5e5e5;"></div>
<div class="a" style="left:1402px;top:441px;width:1px;height:29px;background:#e5e5e5;"></div>
<div class="a" style="left:1493px;top:441px;width:1px;height:29px;background:#e5e5e5;"></div>
<div class="t" style="top:446.3px;line-height:19px;font-size:15.40px;color:#000;letter-spacing:-0.33px;left:328.0px;transform:scaleX(0.9091);transform-origin:left center;">From Date</div>
<div class="t" style="top:446.3px;line-height:19px;font-size:15.40px;color:#000;letter-spacing:-0.33px;left:418.5px;width:200px;text-align:center;transform:scaleX(0.9091);transform-origin:center center;">To Date</div>
<div class="t" style="top:446.3px;line-height:19px;font-size:15.40px;color:#000;letter-spacing:-0.33px;left:518.0px;width:200px;text-align:center;transform:scaleX(0.9091);transform-origin:center center;">Symbol</div>
<div class="t" style="top:446.3px;line-height:19px;font-size:15.40px;color:#000;letter-spacing:-0.33px;left:608.0px;width:200px;text-align:center;transform:scaleX(0.9091);transform-origin:center center;">LB Perf.</div>
<div class="t" style="top:446.3px;line-height:19px;font-size:15.40px;color:#000;letter-spacing:-0.33px;left:698.0px;width:200px;text-align:center;transform:scaleX(0.9091);transform-origin:center center;">LB Vol.</div>
<div class="t" style="top:446.3px;line-height:19px;font-size:15.40px;color:#000;letter-spacing:-0.33px;left:788.0px;width:200px;text-align:center;transform:scaleX(0.9091);transform-origin:center center;">Performance</div>
<div class="t" style="top:446.3px;line-height:19px;font-size:15.40px;color:#000;letter-spacing:-0.33px;left:878.0px;width:200px;text-align:center;transform:scaleX(0.9091);transform-origin:center center;">Volatility</div>
<div class="t" style="top:446.3px;line-height:19px;font-size:15.40px;color:#000;letter-spacing:-0.33px;left:968.0px;width:200px;text-align:center;transform:scaleX(0.9091);transform-origin:center center;">Alloc. %</div>
<div class="t" style="top:446.3px;line-height:19px;font-size:15.40px;color:#000;letter-spacing:-0.33px;left:1058.0px;width:200px;text-align:center;transform:scaleX(0.9091);transform-origin:center center;">Reb. Perf</div>
<div class="t" style="top:446.3px;line-height:19px;font-size:15.40px;color:#000;letter-spacing:-0.33px;left:1157.5px;width:200px;text-align:center;transform:scaleX(0.9091);transform-origin:center center;">Portf. LB Nor...</div>
<div class="t" style="top:446.3px;line-height:19px;font-size:15.40px;color:#000;letter-spacing:-0.33px;left:1257.0px;width:200px;text-align:center;transform:scaleX(0.9091);transform-origin:center center;">Portf. Perf.</div>
<div class="t" style="top:446.3px;line-height:19px;font-size:15.40px;color:#000;letter-spacing:-0.33px;left:1347.5px;width:200px;text-align:center;transform:scaleX(0.9091);transform-origin:center center;">Portf. Return</div>
<div class="a" style="left:1494px;top:441px;width:23px;height:827px;background:#f0f0f0;"></div>
<svg class="a" style="left:1498px;top:446px" width="14" height="12"><polyline points="2.5,8 7,3.5 11.5,8" fill="none" stroke="#555" stroke-width="2"/></svg>
<div class="a" style="left:1497px;top:462px;width:17px;height:85px;background:#cdcdcd;"></div>
<div class="a" style="left:319px;top:471px;width:1174px;height:797px;overflow:hidden;">
<div class="t" style="top:1.1px;line-height:19px;font-size:15.40px;color:#000;letter-spacing:-0.33px;left:9.0px;transform:scaleX(0.9091);transform-origin:left center;">[1]  окт 31 2016</div>
<div class="t" style="top:1.1px;line-height:19px;font-size:15.40px;color:#000;letter-spacing:-0.33px;left:139.5px;width:120px;text-align:center;transform:scaleX(0.9091);transform-origin:center center;">ноя 25 2016</div>
<div class="t" style="top:1.1px;line-height:19px;font-size:15.40px;color:#000;letter-spacing:-0.33px;left:259.0px;width:80px;text-align:center;transform:scaleX(0.9091);transform-origin:center center;">SPY</div>
<div class="t" style="top:22.4px;line-height:19px;font-size:15.40px;color:#000;letter-spacing:-0.33px;left:259.0px;width:80px;text-align:center;transform:scaleX(0.9091);transform-origin:center center;">TLT</div>
<div class="t" style="top:1.1px;line-height:19px;font-size:15.40px;color:#12128a;letter-spacing:-0.33px;left:339.0px;width:100px;text-align:center;transform:scaleX(0.9091);transform-origin:center center;">-0,672</div>
<div class="t" style="top:1.1px;line-height:19px;font-size:15.40px;color:#12128a;letter-spacing:-0.33px;left:429.0px;width:100px;text-align:center;transform:scaleX(0.9091);transform-origin:center center;">6,690</div>
<div class="t" style="top:1.1px;line-height:19px;font-size:15.40px;color:#8c1414;letter-spacing:-0.33px;left:519.0px;width:100px;text-align:center;transform:scaleX(0.9091);transform-origin:center center;">4,220</div>
<div class="t" style="top:1.1px;line-height:19px;font-size:15.40px;color:#8c1414;letter-spacing:-0.33px;left:609.0px;width:100px;text-align:center;transform:scaleX(0.9091);transform-origin:center center;">10,435</div>
<div class="t" style="top:1.1px;line-height:19px;font-size:15.40px;color:#8c1414;letter-spacing:-0.33px;left:699.0px;width:100px;text-align:center;transform:scaleX(0.9091);transform-origin:center center;">60</div>
<div class="t" style="top:1.1px;line-height:19px;font-size:15.40px;color:#8c1414;letter-spacing:-0.33px;left:789.0px;width:100px;text-align:center;transform:scaleX(0.9091);transform-origin:center center;">2,532</div>
<div class="t" style="top:1.1px;line-height:19px;font-size:15.40px;color:#000;letter-spacing:-0.33px;left:888.5px;width:100px;text-align:center;transform:scaleX(0.9091);transform-origin:center center;">0,945</div>
<div class="t" style="top:1.1px;line-height:19px;font-size:15.40px;color:#000;letter-spacing:-0.33px;left:988.0px;width:100px;text-align:center;transform:scaleX(0.9091);transform-origin:center center;">-0,647</div>
<div class="t" style="top:1.1px;line-height:19px;font-size:15.40px;color:#000;letter-spacing:-0.33px;left:1079.0px;width:100px;text-align:center;transform:scaleX(0.9091);transform-origin:center center;">328,135</div>
<div class="t" style="top:22.4px;line-height:19px;font-size:15.40px;color:#12128a;letter-spacing:-0.33px;left:339.0px;width:100px;text-align:center;transform:scaleX(0.9091);transform-origin:center center;">-1,099</div>
<div class="t" style="top:22.4px;line-height:19px;font-size:15.40px;color:#12128a;letter-spacing:-0.33px;left:429.0px;width:100px;text-align:center;transform:scaleX(0.9091);transform-origin:center center;">8,519</div>
<div class="t" style="top:22.4px;line-height:19px;font-size:15.40px;color:#8c1414;letter-spacing:-0.33px;left:519.0px;width:100px;text-align:center;transform:scaleX(0.9091);transform-origin:center center;">-7,947</div>
<div class="t" style="top:22.4px;line-height:19px;font-size:15.40px;color:#8c1414;letter-spacing:-0.33px;left:609.0px;width:100px;text-align:center;transform:scaleX(0.9091);transform-origin:center center;">17,952</div>
<div class="t" style="top:22.4px;line-height:19px;font-size:15.40px;color:#8c1414;letter-spacing:-0.33px;left:699.0px;width:100px;text-align:center;transform:scaleX(0.9091);transform-origin:center center;">40</div>
<div class="t" style="top:22.4px;line-height:19px;font-size:15.40px;color:#8c1414;letter-spacing:-0.33px;left:789.0px;width:100px;text-align:center;transform:scaleX(0.9091);transform-origin:center center;">-3,179</div>
<div class="a" style="left:6px;top:43.0px;width:1168px;height:42.5px;background:#90ee90;"></div>
<div class="t" style="top:43.6px;line-height:19px;font-size:15.40px;color:#000;letter-spacing:-0.33px;left:9.0px;transform:scaleX(0.9091);transform-origin:left center;">[2]  сен 30 2016</div>
<div class="t" style="top:43.6px;line-height:19px;font-size:15.40px;color:#000;letter-spacing:-0.33px;left:139.5px;width:120px;text-align:center;transform:scaleX(0.9091);transform-origin:center center;">окт 31 2016</div>
<div class="t" style="top:43.6px;line-height:19px;font-size:15.40px;color:#000;letter-spacing:-0.33px;left:259.0px;width:80px;text-align:center;transform:scaleX(0.9091);transform-origin:center center;">SPY</div>
<div class="t" style="top:64.8px;line-height:19px;font-size:15.40px;color:#000;letter-spacing:-0.33px;left:259.0px;width:80px;text-align:center;transform:scaleX(0.9091);transform-origin:center center;">TLT</div>
<div class="t" style="top:43.6px;line-height:19px;font-size:15.40px;color:#12128a;letter-spacing:-0.33px;left:339.0px;width:100px;text-align:center;transform:scaleX(0.9091);transform-origin:center center;">-1,709</div>
<div class="t" style="top:43.6px;line-height:19px;font-size:15.40px;color:#12128a;letter-spacing:-0.33px;left:429.0px;width:100px;text-align:center;transform:scaleX(0.9091);transform-origin:center center;">14,458</div>
<div class="t" style="top:43.6px;line-height:19px;font-size:15.40px;color:#8c1414;letter-spacing:-0.33px;left:519.0px;width:100px;text-align:center;transform:scaleX(0.9091);transform-origin:center center;">-1,734</div>
<div class="t" style="top:43.6px;line-height:19px;font-size:15.40px;color:#8c1414;letter-spacing:-0.33px;left:609.0px;width:100px;text-align:center;transform:scaleX(0.9091);transform-origin:center center;">6,992</div>
<div class="t" style="top:43.6px;line-height:19px;font-size:15.40px;color:#8c1414;letter-spacing:-0.33px;left:699.0px;width:100px;text-align:center;transform:scaleX(0.9091);transform-origin:center center;">30</div>
<div class="t" style="top:43.6px;line-height:19px;font-size:15.40px;color:#8c1414;letter-spacing:-0.33px;left:789.0px;width:100px;text-align:center;transform:scaleX(0.9091);transform-origin:center center;">-0,520</div>
<div class="t" style="top:43.6px;line-height:19px;font-size:15.40px;color:#000;letter-spacing:-0.33px;left:888.5px;width:100px;text-align:center;transform:scaleX(0.9091);transform-origin:center center;">0,889</div>
<div class="t" style="top:43.6px;line-height:19px;font-size:15.40px;color:#000;letter-spacing:-0.33px;left:988.0px;width:100px;text-align:center;transform:scaleX(0.9091);transform-origin:center center;">-3,585</div>
<div class="t" style="top:43.6px;line-height:19px;font-size:15.40px;color:#000;letter-spacing:-0.33px;left:1079.0px;width:100px;text-align:center;transform:scaleX(0.9091);transform-origin:center center;">330,270</div>
<div class="t" style="top:64.8px;line-height:19px;font-size:15.40px;color:#12128a;letter-spacing:-0.33px;left:339.0px;width:100px;text-align:center;transform:scaleX(0.9091);transform-origin:center center;">-1,397</div>
<div class="t" style="top:64.8px;line-height:19px;font-size:15.40px;color:#12128a;letter-spacing:-0.33px;left:429.0px;width:100px;text-align:center;transform:scaleX(0.9091);transform-origin:center center;">11,702</div>
<div class="t" style="top:64.8px;line-height:19px;font-size:15.40px;color:#8c1414;letter-spacing:-0.33px;left:519.0px;width:100px;text-align:center;transform:scaleX(0.9091);transform-origin:center center;">-4,379</div>
<div class="t" style="top:64.8px;line-height:19px;font-size:15.40px;color:#8c1414;letter-spacing:-0.33px;left:609.0px;width:100px;text-align:center;transform:scaleX(0.9091);transform-origin:center center;">8,897</div>
<div class="t" style="top:64.8px;line-height:19px;font-size:15.40px;color:#8c1414;letter-spacing:-0.33px;left:699.0px;width:100px;text-align:center;transform:scaleX(0.9091);transform-origin:center center;">70</div>
<div class="t" style="top:64.8px;line-height:19px;font-size:15.40px;color:#8c1414;letter-spacing:-0.33px;left:789.0px;width:100px;text-align:center;transform:scaleX(0.9091);transform-origin:center center;">-3,065</div>
<div class="t" style="top:86.1px;line-height:19px;font-size:15.40px;color:#000;letter-spacing:-0.33px;left:9.0px;transform:scaleX(0.9091);transform-origin:left center;">[3]  авг 31 2016</div>
<div class="t" style="top:86.1px;line-height:19px;font-size:15.40px;color:#000;letter-spacing:-0.33px;left:139.5px;width:120px;text-align:center;transform:scaleX(0.9091);transform-origin:center center;">сен 30 2016</div>
<div class="t" style="top:86.1px;line-height:19px;font-size:15.40px;color:#000;letter-spacing:-0.33px;left:259.0px;width:80px;text-align:center;transform:scaleX(0.9091);transform-origin:center center;">SPY</div>
<div class="t" style="top:107.3px;line-height:19px;font-size:15.40px;color:#000;letter-spacing:-0.33px;left:259.0px;width:80px;text-align:center;transform:scaleX(0.9091);transform-origin:center center;">TLT</div>
<div class="t" style="top:86.1px;line-height:19px;font-size:15.40px;color:#12128a;letter-spacing:-0.33px;left:339.0px;width:100px;text-align:center;transform:scaleX(0.9091);transform-origin:center center;">-0,216</div>
<div class="t" style="top:86.1px;line-height:19px;font-size:15.40px;color:#12128a;letter-spacing:-0.33px;left:429.0px;width:100px;text-align:center;transform:scaleX(0.9091);transform-origin:center center;">5,270</div>
<div class="t" style="top:86.1px;line-height:19px;font-size:15.40px;color:#8c1414;letter-spacing:-0.33px;left:519.0px;width:100px;text-align:center;transform:scaleX(0.9091);transform-origin:center center;">0,005</div>
<div class="t" style="top:86.1px;line-height:19px;font-size:15.40px;color:#8c1414;letter-spacing:-0.33px;left:609.0px;width:100px;text-align:center;transform:scaleX(0.9091);transform-origin:center center;">13,557</div>
<div class="t" style="top:86.1px;line-height:19px;font-size:15.40px;color:#8c1414;letter-spacing:-0.33px;left:699.0px;width:100px;text-align:center;transform:scaleX(0.9091);transform-origin:center center;">70</div>
<div class="t" style="top:86.1px;line-height:19px;font-size:15.40px;color:#8c1414;letter-spacing:-0.33px;left:789.0px;width:100px;text-align:center;transform:scaleX(0.9091);transform-origin:center center;">0,003</div>
<div class="t" style="top:86.1px;line-height:19px;font-size:15.40px;color:#000;letter-spacing:-0.33px;left:888.5px;width:100px;text-align:center;transform:scaleX(0.9091);transform-origin:center center;">0,956</div>
<div class="t" style="top:86.1px;line-height:19px;font-size:15.40px;color:#000;letter-spacing:-0.33px;left:988.0px;width:100px;text-align:center;transform:scaleX(0.9091);transform-origin:center center;">-0,451</div>
<div class="t" style="top:86.1px;line-height:19px;font-size:15.40px;color:#000;letter-spacing:-0.33px;left:1079.0px;width:100px;text-align:center;transform:scaleX(0.9091);transform-origin:center center;">342,551</div>
<div class="t" style="top:107.3px;line-height:19px;font-size:15.40px;color:#12128a;letter-spacing:-0.33px;left:339.0px;width:100px;text-align:center;transform:scaleX(0.9091);transform-origin:center center;">0,855</div>
<div class="t" style="top:107.3px;line-height:19px;font-size:15.40px;color:#12128a;letter-spacing:-0.33px;left:429.0px;width:100px;text-align:center;transform:scaleX(0.9091);transform-origin:center center;">10,653</div>
<div class="t" style="top:107.3px;line-height:19px;font-size:15.40px;color:#8c1414;letter-spacing:-0.33px;left:519.0px;width:100px;text-align:center;transform:scaleX(0.9091);transform-origin:center center;">-1,514</div>
<div class="t" style="top:107.3px;line-height:19px;font-size:15.40px;color:#8c1414;letter-spacing:-0.33px;left:609.0px;width:100px;text-align:center;transform:scaleX(0.9091);transform-origin:center center;">11,212</div>
<div class="t" style="top:107.3px;line-height:19px;font-size:15.40px;color:#8c1414;letter-spacing:-0.33px;left:699.0px;width:100px;text-align:center;transform:scaleX(0.9091);transform-origin:center center;">30</div>
<div class="t" style="top:107.3px;line-height:19px;font-size:15.40px;color:#8c1414;letter-spacing:-0.33px;left:789.0px;width:100px;text-align:center;transform:scaleX(0.9091);transform-origin:center center;">-0,454</div>
<div class="a" style="left:6px;top:128.0px;width:1168px;height:42.5px;background:#90ee90;"></div>
<div class="t" style="top:128.6px;line-height:19px;font-size:15.40px;color:#000;letter-spacing:-0.33px;left:9.0px;transform:scaleX(0.9091);transform-origin:left center;">[4]  июл 29 2016</div>
<div class="t" style="top:128.6px;line-height:19px;font-size:15.40px;color:#000;letter-spacing:-0.33px;left:139.5px;width:120px;text-align:center;transform:scaleX(0.9091);transform-origin:center center;">авг 31 2016</div>
<div class="t" style="top:128.6px;line-height:19px;font-size:15.40px;color:#000;letter-spacing:-0.33px;left:259.0px;width:80px;text-align:center;transform:scaleX(0.9091);transform-origin:center center;">SPY</div>
<div class="t" style="top:149.8px;line-height:19px;font-size:15.40px;color:#000;letter-spacing:-0.33px;left:259.0px;width:80px;text-align:center;transform:scaleX(0.9091);transform-origin:center center;">TLT</div>
<div class="t" style="top:128.6px;line-height:19px;font-size:15.40px;color:#12128a;letter-spacing:-0.33px;left:339.0px;width:100px;text-align:center;transform:scaleX(0.9091);transform-origin:center center;">3,963</div>
<div class="t" style="top:128.6px;line-height:19px;font-size:15.40px;color:#12128a;letter-spacing:-0.33px;left:429.0px;width:100px;text-align:center;transform:scaleX(0.9091);transform-origin:center center;">7,460</div>
<div class="t" style="top:128.6px;line-height:19px;font-size:15.40px;color:#8c1414;letter-spacing:-0.33px;left:519.0px;width:100px;text-align:center;transform:scaleX(0.9091);transform-origin:center center;">0,120</div>
<div class="t" style="top:128.6px;line-height:19px;font-size:15.40px;color:#8c1414;letter-spacing:-0.33px;left:609.0px;width:100px;text-align:center;transform:scaleX(0.9091);transform-origin:center center;">5,263</div>
<div class="t" style="top:128.6px;line-height:19px;font-size:15.40px;color:#8c1414;letter-spacing:-0.33px;left:699.0px;width:100px;text-align:center;transform:scaleX(0.9091);transform-origin:center center;">70</div>
<div class="t" style="top:128.6px;line-height:19px;font-size:15.40px;color:#8c1414;letter-spacing:-0.33px;left:789.0px;width:100px;text-align:center;transform:scaleX(0.9091);transform-origin:center center;">0,084</div>
<div class="t" style="top:128.6px;line-height:19px;font-size:15.40px;color:#000;letter-spacing:-0.33px;left:888.5px;width:100px;text-align:center;transform:scaleX(0.9091);transform-origin:center center;">0,967</div>
<div class="t" style="top:128.6px;line-height:19px;font-size:15.40px;color:#000;letter-spacing:-0.33px;left:988.0px;width:100px;text-align:center;transform:scaleX(0.9091);transform-origin:center center;">-0,219</div>
<div class="t" style="top:128.6px;line-height:19px;font-size:15.40px;color:#000;letter-spacing:-0.33px;left:1079.0px;width:100px;text-align:center;transform:scaleX(0.9091);transform-origin:center center;">344,102</div>
<div class="t" style="top:149.8px;line-height:19px;font-size:15.40px;color:#12128a;letter-spacing:-0.33px;left:339.0px;width:100px;text-align:center;transform:scaleX(0.9091);transform-origin:center center;">-2,603</div>
<div class="t" style="top:149.8px;line-height:19px;font-size:15.40px;color:#12128a;letter-spacing:-0.33px;left:429.0px;width:100px;text-align:center;transform:scaleX(0.9091);transform-origin:center center;">13,042</div>
<div class="t" style="top:171.1px;line-height:19px;font-size:15.40px;color:#000;letter-spacing:-0.33px;left:9.0px;transform:scaleX(0.9091);transform-origin:left center;">[5]  июн 30 2016</div>
<div class="t" style="top:171.1px;line-height:19px;font-size:15.40px;color:#000;letter-spacing:-0.33px;left:139.5px;width:120px;text-align:center;transform:scaleX(0.9091);transform-origin:center center;">июл 29 2016</div>
<div class="t" style="top:171.1px;line-height:19px;font-size:15.40px;color:#000;letter-spacing:-0.33px;left:259.0px;width:80px;text-align:center;transform:scaleX(0.9091);transform-origin:center center;">SPY</div>
<div class="t" style="top:192.3px;line-height:19px;font-size:15.40px;color:#000;letter-spacing:-0.33px;left:259.0px;width:80px;text-align:center;transform:scaleX(0.9091);transform-origin:center center;">TLT</div>
<div class="t" style="top:171.1px;line-height:19px;font-size:15.40px;color:#12128a;letter-spacing:-0.33px;left:339.0px;width:100px;text-align:center;transform:scaleX(0.9091);transform-origin:center center;">-3,439</div>
<div class="t" style="top:171.1px;line-height:19px;font-size:15.40px;color:#12128a;letter-spacing:-0.33px;left:429.0px;width:100px;text-align:center;transform:scaleX(0.9091);transform-origin:center center;">19,446</div>
<div class="t" style="top:192.3px;line-height:19px;font-size:15.40px;color:#12128a;letter-spacing:-0.33px;left:339.0px;width:100px;text-align:center;transform:scaleX(0.9091);transform-origin:center center;">2,743</div>
<div class="t" style="top:192.3px;line-height:19px;font-size:15.40px;color:#12128a;letter-spacing:-0.33px;left:429.0px;width:100px;text-align:center;transform:scaleX(0.9091);transform-origin:center center;">15,650</div>
<div class="a" style="left:6px;top:213.0px;width:1168px;height:42.5px;background:#90ee90;"></div>
<div class="t" style="top:213.6px;line-height:19px;font-size:15.40px;color:#000;letter-spacing:-0.33px;left:9.0px;transform:scaleX(0.9091);transform-origin:left center;">[6]  май 31 2016</div>
<div class="t" style="top:213.6px;line-height:19px;font-size:15.40px;color:#000;letter-spacing:-0.33px;left:139.5px;width:120px;text-align:center;transform:scaleX(0.9091);transform-origin:center center;">июн 30 2016</div>
<div class="t" style="top:213.6px;line-height:19px;font-size:15.40px;color:#000;letter-spacing:-0.33px;left:259.0px;width:80px;text-align:center;transform:scaleX(0.9091);transform-origin:center center;">SPY</div>
<div class="t" style="top:234.8px;line-height:19px;font-size:15.40px;color:#000;letter-spacing:-0.33px;left:259.0px;width:80px;text-align:center;transform:scaleX(0.9091);transform-origin:center center;">TLT</div>
<div class="t" style="top:213.6px;line-height:19px;font-size:15.40px;color:#12128a;letter-spacing:-0.33px;left:339.0px;width:100px;text-align:center;transform:scaleX(0.9091);transform-origin:center center;">1,413</div>
<div class="t" style="top:213.6px;line-height:19px;font-size:15.40px;color:#12128a;letter-spacing:-0.33px;left:429.0px;width:100px;text-align:center;transform:scaleX(0.9091);transform-origin:center center;">10,436</div>
<div class="t" style="top:234.8px;line-height:19px;font-size:15.40px;color:#12128a;letter-spacing:-0.33px;left:339.0px;width:100px;text-align:center;transform:scaleX(0.9091);transform-origin:center center;">-0,218</div>
<div class="t" style="top:234.8px;line-height:19px;font-size:15.40px;color:#12128a;letter-spacing:-0.33px;left:429.0px;width:100px;text-align:center;transform:scaleX(0.9091);transform-origin:center center;">9,067</div>
<div class="t" style="top:256.1px;line-height:19px;font-size:15.40px;color:#000;letter-spacing:-0.33px;left:9.0px;transform:scaleX(0.9091);transform-origin:left center;">[7]  апр 29 2016</div>
<div class="t" style="top:256.1px;line-height:19px;font-size:15.40px;color:#000;letter-spacing:-0.33px;left:139.5px;width:120px;text-align:center;transform:scaleX(0.9091);transform-origin:center center;">май 31 2016</div>
<div class="t" style="top:256.1px;line-height:19px;font-size:15.40px;color:#000;letter-spacing:-0.33px;left:259.0px;width:80px;text-align:center;transform:scaleX(0.9091);transform-origin:center center;">SPY</div>
<div class="t" style="top:277.3px;line-height:19px;font-size:15.40px;color:#000;letter-spacing:-0.33px;left:259.0px;width:80px;text-align:center;transform:scaleX(0.9091);transform-origin:center center;">TLT</div>
<div class="t" style="top:256.1px;line-height:19px;font-size:15.40px;color:#12128a;letter-spacing:-0.33px;left:339.0px;width:100px;text-align:center;transform:scaleX(0.9091);transform-origin:center center;">2,143</div>
<div class="t" style="top:256.1px;line-height:19px;font-size:15.40px;color:#12128a;letter-spacing:-0.33px;left:429.0px;width:100px;text-align:center;transform:scaleX(0.9091);transform-origin:center center;">10,134</div>
<div class="t" style="top:277.3px;line-height:19px;font-size:15.40px;color:#12128a;letter-spacing:-0.33px;left:339.0px;width:100px;text-align:center;transform:scaleX(0.9091);transform-origin:center center;">-3,338</div>
<div class="t" style="top:277.3px;line-height:19px;font-size:15.40px;color:#12128a;letter-spacing:-0.33px;left:429.0px;width:100px;text-align:center;transform:scaleX(0.9091);transform-origin:center center;">10,728</div>
<div class="a" style="left:6px;top:298.0px;width:1168px;height:42.5px;background:#90ee90;"></div>
<div class="t" style="top:298.6px;line-height:19px;font-size:15.40px;color:#000;letter-spacing:-0.33px;left:9.0px;transform:scaleX(0.9091);transform-origin:left center;">[8]  мар 31 2016</div>
<div class="t" style="top:298.6px;line-height:19px;font-size:15.40px;color:#000;letter-spacing:-0.33px;left:139.5px;width:120px;text-align:center;transform:scaleX(0.9091);transform-origin:center center;">апр 29 2016</div>
<div class="t" style="top:298.6px;line-height:19px;font-size:15.40px;color:#000;letter-spacing:-0.33px;left:259.0px;width:80px;text-align:center;transform:scaleX(0.9091);transform-origin:center center;">SPY</div>
<div class="t" style="top:319.8px;line-height:19px;font-size:15.40px;color:#000;letter-spacing:-0.33px;left:259.0px;width:80px;text-align:center;transform:scaleX(0.9091);transform-origin:center center;">TLT</div>
<div class="t" style="top:298.6px;line-height:19px;font-size:15.40px;color:#12128a;letter-spacing:-0.33px;left:339.0px;width:100px;text-align:center;transform:scaleX(0.9091);transform-origin:center center;">1,887</div>
<div class="t" style="top:298.6px;line-height:19px;font-size:15.40px;color:#12128a;letter-spacing:-0.33px;left:429.0px;width:100px;text-align:center;transform:scaleX(0.9091);transform-origin:center center;">8,970</div>
<div class="t" style="top:319.8px;line-height:19px;font-size:15.40px;color:#12128a;letter-spacing:-0.33px;left:339.0px;width:100px;text-align:center;transform:scaleX(0.9091);transform-origin:center center;">0,731</div>
<div class="t" style="top:319.8px;line-height:19px;font-size:15.40px;color:#12128a;letter-spacing:-0.33px;left:429.0px;width:100px;text-align:center;transform:scaleX(0.9091);transform-origin:center center;">10,406</div>
<div class="t" style="top:341.1px;line-height:19px;font-size:15.40px;color:#000;letter-spacing:-0.33px;left:9.0px;transform:scaleX(0.9091);transform-origin:left center;">[9]  фев 29 2016</div>
<div class="t" style="top:341.1px;line-height:19px;font-size:15.40px;color:#000;letter-spacing:-0.33px;left:139.5px;width:120px;text-align:center;transform:scaleX(0.9091);transform-origin:center center;">мар 31 2016</div>
<div class="t" style="top:341.1px;line-height:19px;font-size:15.40px;color:#000;letter-spacing:-0.33px;left:259.0px;width:80px;text-align:center;transform:scaleX(0.9091);transform-origin:center center;">SPY</div>
<div class="t" style="top:362.3px;line-height:19px;font-size:15.40px;color:#000;letter-spacing:-0.33px;left:259.0px;width:80px;text-align:center;transform:scaleX(0.9091);transform-origin:center center;">TLT</div>
<div class="t" style="top:341.1px;line-height:19px;font-size:15.40px;color:#12128a;letter-spacing:-0.33px;left:339.0px;width:100px;text-align:center;transform:scaleX(0.9091);transform-origin:center center;">1,145</div>
<div class="t" style="top:341.1px;line-height:19px;font-size:15.40px;color:#12128a;letter-spacing:-0.33px;left:429.0px;width:100px;text-align:center;transform:scaleX(0.9091);transform-origin:center center;">18,840</div>
<div class="t" style="top:362.3px;line-height:19px;font-size:15.40px;color:#12128a;letter-spacing:-0.33px;left:339.0px;width:100px;text-align:center;transform:scaleX(0.9091);transform-origin:center center;">1,890</div>
<div class="t" style="top:362.3px;line-height:19px;font-size:15.40px;color:#12128a;letter-spacing:-0.33px;left:429.0px;width:100px;text-align:center;transform:scaleX(0.9091);transform-origin:center center;">14,958</div>
<div class="a" style="left:6px;top:383.0px;width:1168px;height:42.5px;background:#90ee90;"></div>
<div class="t" style="top:383.6px;line-height:19px;font-size:15.40px;color:#000;letter-spacing:-0.33px;left:9.0px;transform:scaleX(0.9091);transform-origin:left center;">[10]  янв 29 2016</div>
<div class="t" style="top:383.6px;line-height:19px;font-size:15.40px;color:#000;letter-spacing:-0.33px;left:139.5px;width:120px;text-align:center;transform:scaleX(0.9091);transform-origin:center center;">фев 29 2016</div>
<div class="t" style="top:383.6px;line-height:19px;font-size:15.40px;color:#000;letter-spacing:-0.33px;left:259.0px;width:80px;text-align:center;transform:scaleX(0.9091);transform-origin:center center;">SPY</div>
<div class="t" style="top:404.8px;line-height:19px;font-size:15.40px;color:#000;letter-spacing:-0.33px;left:259.0px;width:80px;text-align:center;transform:scaleX(0.9091);transform-origin:center center;">TLT</div>
<div class="t" style="top:383.6px;line-height:19px;font-size:15.40px;color:#12128a;letter-spacing:-0.33px;left:339.0px;width:100px;text-align:center;transform:scaleX(0.9091);transform-origin:center center;">-6,869</div>
<div class="t" style="top:383.6px;line-height:19px;font-size:15.40px;color:#12128a;letter-spacing:-0.33px;left:429.0px;width:100px;text-align:center;transform:scaleX(0.9091);transform-origin:center center;">23,369</div>
<div class="t" style="top:404.8px;line-height:19px;font-size:15.40px;color:#12128a;letter-spacing:-0.33px;left:339.0px;width:100px;text-align:center;transform:scaleX(0.9091);transform-origin:center center;">3,799</div>
<div class="t" style="top:404.8px;line-height:19px;font-size:15.40px;color:#12128a;letter-spacing:-0.33px;left:429.0px;width:100px;text-align:center;transform:scaleX(0.9091);transform-origin:center center;">12,389</div>
<div class="t" style="top:426.1px;line-height:19px;font-size:15.40px;color:#000;letter-spacing:-0.33px;left:9.0px;transform:scaleX(0.9091);transform-origin:left center;">[11]  дек 31 2015</div>
<div class="t" style="top:426.1px;line-height:19px;font-size:15.40px;color:#000;letter-spacing:-0.33px;left:139.5px;width:120px;text-align:center;transform:scaleX(0.9091);transform-origin:center center;">янв 29 2016</div>
<div class="t" style="top:426.1px;line-height:19px;font-size:15.40px;color:#000;letter-spacing:-0.33px;left:259.0px;width:80px;text-align:center;transform:scaleX(0.9091);transform-origin:center center;">SPY</div>
<div class="t" style="top:447.3px;line-height:19px;font-size:15.40px;color:#000;letter-spacing:-0.33px;left:259.0px;width:80px;text-align:center;transform:scaleX(0.9091);transform-origin:center center;">TLT</div>
<div class="t" style="top:426.1px;line-height:19px;font-size:15.40px;color:#12128a;letter-spacing:-0.33px;left:339.0px;width:100px;text-align:center;transform:scaleX(0.9091);transform-origin:center center;">-1,285</div>
<div class="t" style="top:426.1px;line-height:19px;font-size:15.40px;color:#12128a;letter-spacing:-0.33px;left:429.0px;width:100px;text-align:center;transform:scaleX(0.9091);transform-origin:center center;">17,776</div>
<div class="t" style="top:447.3px;line-height:19px;font-size:15.40px;color:#12128a;letter-spacing:-0.33px;left:339.0px;width:100px;text-align:center;transform:scaleX(0.9091);transform-origin:center center;">1,230</div>
<div class="t" style="top:447.3px;line-height:19px;font-size:15.40px;color:#12128a;letter-spacing:-0.33px;left:429.0px;width:100px;text-align:center;transform:scaleX(0.9091);transform-origin:center center;">12,760</div>
<div class="a" style="left:6px;top:468.0px;width:1168px;height:42.5px;background:#90ee90;"></div>
<div class="t" style="top:468.6px;line-height:19px;font-size:15.40px;color:#000;letter-spacing:-0.33px;left:9.0px;transform:scaleX(0.9091);transform-origin:left center;">[12]  ноя 30 2015</div>
<div class="t" style="top:468.6px;line-height:19px;font-size:15.40px;color:#000;letter-spacing:-0.33px;left:139.5px;width:120px;text-align:center;transform:scaleX(0.9091);transform-origin:center center;">дек 31 2015</div>
<div class="t" style="top:468.6px;line-height:19px;font-size:15.40px;color:#000;letter-spacing:-0.33px;left:259.0px;width:80px;text-align:center;transform:scaleX(0.9091);transform-origin:center center;">SPY</div>
<div class="t" style="top:489.8px;line-height:19px;font-size:15.40px;color:#000;letter-spacing:-0.33px;left:259.0px;width:80px;text-align:center;transform:scaleX(0.9091);transform-origin:center center;">TLT</div>
<div class="t" style="top:468.6px;line-height:19px;font-size:15.40px;color:#12128a;letter-spacing:-0.33px;left:339.0px;width:100px;text-align:center;transform:scaleX(0.9091);transform-origin:center center;">-0,913</div>
<div class="t" style="top:468.6px;line-height:19px;font-size:15.40px;color:#12128a;letter-spacing:-0.33px;left:429.0px;width:100px;text-align:center;transform:scaleX(0.9091);transform-origin:center center;">11,309</div>
<div class="t" style="top:489.8px;line-height:19px;font-size:15.40px;color:#12128a;letter-spacing:-0.33px;left:339.0px;width:100px;text-align:center;transform:scaleX(0.9091);transform-origin:center center;">-0,110</div>
<div class="t" style="top:489.8px;line-height:19px;font-size:15.40px;color:#12128a;letter-spacing:-0.33px;left:429.0px;width:100px;text-align:center;transform:scaleX(0.9091);transform-origin:center center;">8,000</div>
<div class="t" style="top:511.1px;line-height:19px;font-size:15.40px;color:#000;letter-spacing:-0.33px;left:9.0px;transform:scaleX(0.9091);transform-origin:left center;">[13]  окт 30 2015</div>
<div class="t" style="top:511.1px;line-height:19px;font-size:15.40px;color:#000;letter-spacing:-0.33px;left:139.5px;width:120px;text-align:center;transform:scaleX(0.9091);transform-origin:center center;">ноя 30 2015</div>
<div class="t" style="top:511.1px;line-height:19px;font-size:15.40px;color:#000;letter-spacing:-0.33px;left:259.0px;width:80px;text-align:center;transform:scaleX(0.9091);transform-origin:center center;">SPY</div>
<div class="t" style="top:532.3px;line-height:19px;font-size:15.40px;color:#000;letter-spacing:-0.33px;left:259.0px;width:80px;text-align:center;transform:scaleX(0.9091);transform-origin:center center;">TLT</div>
<div class="t" style="top:511.1px;line-height:19px;font-size:15.40px;color:#12128a;letter-spacing:-0.33px;left:339.0px;width:100px;text-align:center;transform:scaleX(0.9091);transform-origin:center center;">4,680</div>
<div class="t" style="top:511.1px;line-height:19px;font-size:15.40px;color:#12128a;letter-spacing:-0.33px;left:429.0px;width:100px;text-align:center;transform:scaleX(0.9091);transform-origin:center center;">11,322</div>
<div class="t" style="top:532.3px;line-height:19px;font-size:15.40px;color:#12128a;letter-spacing:-0.33px;left:339.0px;width:100px;text-align:center;transform:scaleX(0.9091);transform-origin:center center;">0,501</div>
<div class="t" style="top:532.3px;line-height:19px;font-size:15.40px;color:#12128a;letter-spacing:-0.33px;left:429.0px;width:100px;text-align:center;transform:scaleX(0.9091);transform-origin:center center;">10,691</div>
<div class="a" style="left:6px;top:553.0px;width:1168px;height:42.5px;background:#90ee90;"></div>
<div class="t" style="top:553.6px;line-height:19px;font-size:15.40px;color:#000;letter-spacing:-0.33px;left:9.0px;transform:scaleX(0.9091);transform-origin:left center;">[14]  сен 30 2015</div>
<div class="t" style="top:553.6px;line-height:19px;font-size:15.40px;color:#000;letter-spacing:-0.33px;left:139.5px;width:120px;text-align:center;transform:scaleX(0.9091);transform-origin:center center;">окт 30 2015</div>
<div class="t" style="top:553.6px;line-height:19px;font-size:15.40px;color:#000;letter-spacing:-0.33px;left:259.0px;width:80px;text-align:center;transform:scaleX(0.9091);transform-origin:center center;">SPY</div>
<div class="t" style="top:574.8px;line-height:19px;font-size:15.40px;color:#000;letter-spacing:-0.33px;left:259.0px;width:80px;text-align:center;transform:scaleX(0.9091);transform-origin:center center;">TLT</div>
<div class="t" style="top:553.6px;line-height:19px;font-size:15.40px;color:#12128a;letter-spacing:-0.33px;left:339.0px;width:100px;text-align:center;transform:scaleX(0.9091);transform-origin:center center;">-0,840</div>
<div class="t" style="top:553.6px;line-height:19px;font-size:15.40px;color:#12128a;letter-spacing:-0.33px;left:429.0px;width:100px;text-align:center;transform:scaleX(0.9091);transform-origin:center center;">19,231</div>
<div class="t" style="top:574.8px;line-height:19px;font-size:15.40px;color:#12128a;letter-spacing:-0.33px;left:339.0px;width:100px;text-align:center;transform:scaleX(0.9091);transform-origin:center center;">0,850</div>
<div class="t" style="top:574.8px;line-height:19px;font-size:15.40px;color:#12128a;letter-spacing:-0.33px;left:429.0px;width:100px;text-align:center;transform:scaleX(0.9091);transform-origin:center center;">16,564</div>
<div class="t" style="top:596.1px;line-height:19px;font-size:15.40px;color:#000;letter-spacing:-0.33px;left:9.0px;transform:scaleX(0.9091);transform-origin:left center;">[15]  авг 31 2015</div>
<div class="t" style="top:596.1px;line-height:19px;font-size:15.40px;color:#000;letter-spacing:-0.33px;left:139.5px;width:120px;text-align:center;transform:scaleX(0.9091);transform-origin:center center;">сен 30 2015</div>
<div class="t" style="top:596.1px;line-height:19px;font-size:15.40px;color:#000;letter-spacing:-0.33px;left:259.0px;width:80px;text-align:center;transform:scaleX(0.9091);transform-origin:center center;">SPY</div>
<div class="t" style="top:617.3px;line-height:19px;font-size:15.40px;color:#000;letter-spacing:-0.33px;left:259.0px;width:80px;text-align:center;transform:scaleX(0.9091);transform-origin:center center;">TLT</div>
<div class="t" style="top:596.1px;line-height:19px;font-size:15.40px;color:#12128a;letter-spacing:-0.33px;left:339.0px;width:100px;text-align:center;transform:scaleX(0.9091);transform-origin:center center;">-11,459</div>
<div class="t" style="top:596.1px;line-height:19px;font-size:15.40px;color:#12128a;letter-spacing:-0.33px;left:429.0px;width:100px;text-align:center;transform:scaleX(0.9091);transform-origin:center center;">27,472</div>
<div class="t" style="top:617.3px;line-height:19px;font-size:15.40px;color:#12128a;letter-spacing:-0.33px;left:339.0px;width:100px;text-align:center;transform:scaleX(0.9091);transform-origin:center center;">2,154</div>
<div class="t" style="top:617.3px;line-height:19px;font-size:15.40px;color:#12128a;letter-spacing:-0.33px;left:429.0px;width:100px;text-align:center;transform:scaleX(0.9091);transform-origin:center center;">15,218</div>
<div class="a" style="left:6px;top:638.0px;width:1168px;height:42.5px;background:#90ee90;"></div>
<div class="t" style="top:638.6px;line-height:19px;font-size:15.40px;color:#000;letter-spacing:-0.33px;left:9.0px;transform:scaleX(0.9091);transform-origin:left center;">[16]  июл 31 2015</div>
<div class="t" style="top:638.6px;line-height:19px;font-size:15.40px;color:#000;letter-spacing:-0.33px;left:139.5px;width:120px;text-align:center;transform:scaleX(0.9091);transform-origin:center center;">авг 31 2015</div>
<div class="t" style="top:638.6px;line-height:19px;font-size:15.40px;color:#000;letter-spacing:-0.33px;left:259.0px;width:80px;text-align:center;transform:scaleX(0.9091);transform-origin:center center;">SPY</div>
<div class="t" style="top:659.8px;line-height:19px;font-size:15.40px;color:#000;letter-spacing:-0.33px;left:259.0px;width:80px;text-align:center;transform:scaleX(0.9091);transform-origin:center center;">TLT</div>
<div class="t" style="top:638.6px;line-height:19px;font-size:15.40px;color:#12128a;letter-spacing:-0.33px;left:339.0px;width:100px;text-align:center;transform:scaleX(0.9091);transform-origin:center center;">-0,603</div>
<div class="t" style="top:638.6px;line-height:19px;font-size:15.40px;color:#12128a;letter-spacing:-0.33px;left:429.0px;width:100px;text-align:center;transform:scaleX(0.9091);transform-origin:center center;">11,885</div>
<div class="t" style="top:659.8px;line-height:19px;font-size:15.40px;color:#12128a;letter-spacing:-0.33px;left:339.0px;width:100px;text-align:center;transform:scaleX(0.9091);transform-origin:center center;">2,342</div>
<div class="t" style="top:659.8px;line-height:19px;font-size:15.40px;color:#12128a;letter-spacing:-0.33px;left:429.0px;width:100px;text-align:center;transform:scaleX(0.9091);transform-origin:center center;">13,588</div>
<div class="t" style="top:681.1px;line-height:19px;font-size:15.40px;color:#000;letter-spacing:-0.33px;left:9.0px;transform:scaleX(0.9091);transform-origin:left center;">[17]  июн 30 2015</div>
<div class="t" style="top:681.1px;line-height:19px;font-size:15.40px;color:#000;letter-spacing:-0.33px;left:139.5px;width:120px;text-align:center;transform:scaleX(0.9091);transform-origin:center center;">июл 31 2015</div>
<div class="t" style="top:681.1px;line-height:19px;font-size:15.40px;color:#000;letter-spacing:-0.33px;left:259.0px;width:80px;text-align:center;transform:scaleX(0.9091);transform-origin:center center;">SPY</div>
<div class="t" style="top:702.3px;line-height:19px;font-size:15.40px;color:#000;letter-spacing:-0.33px;left:259.0px;width:80px;text-align:center;transform:scaleX(0.9091);transform-origin:center center;">TLT</div>
<div class="t" style="top:681.1px;line-height:19px;font-size:15.40px;color:#12128a;letter-spacing:-0.33px;left:339.0px;width:100px;text-align:center;transform:scaleX(0.9091);transform-origin:center center;">0,648</div>
<div class="t" style="top:681.1px;line-height:19px;font-size:15.40px;color:#12128a;letter-spacing:-0.33px;left:429.0px;width:100px;text-align:center;transform:scaleX(0.9091);transform-origin:center center;">11,554</div>
<div class="t" style="top:702.3px;line-height:19px;font-size:15.40px;color:#12128a;letter-spacing:-0.33px;left:339.0px;width:100px;text-align:center;transform:scaleX(0.9091);transform-origin:center center;">-1,777</div>
<div class="t" style="top:702.3px;line-height:19px;font-size:15.40px;color:#12128a;letter-spacing:-0.33px;left:429.0px;width:100px;text-align:center;transform:scaleX(0.9091);transform-origin:center center;">18,666</div>
<div class="a" style="left:6px;top:723.0px;width:1168px;height:42.5px;background:#90ee90;"></div>
<div class="t" style="top:723.6px;line-height:19px;font-size:15.40px;color:#000;letter-spacing:-0.33px;left:9.0px;transform:scaleX(0.9091);transform-origin:left center;">[18]  май 29 2015</div>
<div class="t" style="top:723.6px;line-height:19px;font-size:15.40px;color:#000;letter-spacing:-0.33px;left:139.5px;width:120px;text-align:center;transform:scaleX(0.9091);transform-origin:center center;">июн 30 2015</div>
<div class="t" style="top:723.6px;line-height:19px;font-size:15.40px;color:#000;letter-spacing:-0.33px;left:259.0px;width:80px;text-align:center;transform:scaleX(0.9091);transform-origin:center center;">SPY</div>
<div class="t" style="top:744.8px;line-height:19px;font-size:15.40px;color:#000;letter-spacing:-0.33px;left:259.0px;width:80px;text-align:center;transform:scaleX(0.9091);transform-origin:center center;">TLT</div>
<div class="t" style="top:723.6px;line-height:19px;font-size:15.40px;color:#12128a;letter-spacing:-0.33px;left:339.0px;width:100px;text-align:center;transform:scaleX(0.9091);transform-origin:center center;">0,784</div>
<div class="t" style="top:723.6px;line-height:19px;font-size:15.40px;color:#12128a;letter-spacing:-0.33px;left:429.0px;width:100px;text-align:center;transform:scaleX(0.9091);transform-origin:center center;">10,013</div>
<div class="t" style="top:744.8px;line-height:19px;font-size:15.40px;color:#12128a;letter-spacing:-0.33px;left:339.0px;width:100px;text-align:center;transform:scaleX(0.9091);transform-origin:center center;">-2,018</div>
<div class="t" style="top:744.8px;line-height:19px;font-size:15.40px;color:#12128a;letter-spacing:-0.33px;left:429.0px;width:100px;text-align:center;transform:scaleX(0.9091);transform-origin:center center;">18,226</div>
<div class="t" style="top:766.1px;line-height:19px;font-size:15.40px;color:#000;letter-spacing:-0.33px;left:9.0px;transform:scaleX(0.9091);transform-origin:left center;">[19]  апр 30 2015</div>
<div class="t" style="top:766.1px;line-height:19px;font-size:15.40px;color:#000;letter-spacing:-0.33px;left:139.5px;width:120px;text-align:center;transform:scaleX(0.9091);transform-origin:center center;">май 29 2015</div>
<div class="t" style="top:766.1px;line-height:19px;font-size:15.40px;color:#000;letter-spacing:-0.33px;left:259.0px;width:80px;text-align:center;transform:scaleX(0.9091);transform-origin:center center;">SPY</div>
<div class="t" style="top:787.3px;line-height:19px;font-size:15.40px;color:#000;letter-spacing:-0.33px;left:259.0px;width:80px;text-align:center;transform:scaleX(0.9091);transform-origin:center center;">TLT</div>
<div class="t" style="top:766.1px;line-height:19px;font-size:15.40px;color:#12128a;letter-spacing:-0.33px;left:339.0px;width:100px;text-align:center;transform:scaleX(0.9091);transform-origin:center center;">1,809</div>
<div class="t" style="top:766.1px;line-height:19px;font-size:15.40px;color:#12128a;letter-spacing:-0.33px;left:429.0px;width:100px;text-align:center;transform:scaleX(0.9091);transform-origin:center center;">8,547</div>
<div class="t" style="top:787.3px;line-height:19px;font-size:15.40px;color:#12128a;letter-spacing:-0.33px;left:339.0px;width:100px;text-align:center;transform:scaleX(0.9091);transform-origin:center center;">0,791</div>
<div class="t" style="top:787.3px;line-height:19px;font-size:15.40px;color:#12128a;letter-spacing:-0.33px;left:429.0px;width:100px;text-align:center;transform:scaleX(0.9091);transform-origin:center center;">12,312</div>
</div>
<div class="a" style="left:816px;top:607px;width:855px;height:758px;background:#f0f0f0;border:1px solid #a8a8a8;box-sizing:border-box;box-shadow:0 3px 12px 1px rgba(0,0,0,0.24);"></div>
<div class="a" style="left:817px;top:608px;width:853px;height:38px;background:#fff;"></div>
<div class="a" style="left:828px;top:617px;width:18px;height:18px;background:#e4e4e4;border:1px solid #cdcdcd;box-sizing:border-box;"></div>
<div class="a" style="left:830px;top:619px;width:4px;height:3px;background:#fff;"></div>
<div class="a" style="left:836px;top:618px;width:9px;height:9px;background:linear-gradient(135deg,#ffeaa0,#f5c000);border:1px solid #b8900a;box-sizing:border-box;"></div>
<div class="a" style="left:829px;top:623px;width:6px;height:7px;background:#d83a2a;border:1px solid #902010;box-sizing:border-box;"></div>
<div class="a" style="left:836px;top:628px;width:6px;height:6px;background:#6a9ae8;border:1px solid #4070c0;box-sizing:border-box;"></div>
<div class="t" style="top:616.8px;line-height:19px;font-size:15.84px;color:#999;letter-spacing:0.00px;left:852.0px;transform:scaleX(0.9091);transform-origin:left center;">SPY</div>
<svg class="a" style="left:1521px;top:607px" width="150" height="38"><line x1="2" y1="18.5" x2="14" y2="18.5" stroke="#333" stroke-width="1"/><rect x="58.5" y="13.5" width="11" height="11" fill="none" stroke="#333" stroke-width="1"/><line x1="115" y1="13" x2="127" y2="25" stroke="#333" stroke-width="1.1"/><line x1="127" y1="13" x2="115" y2="25" stroke="#333" stroke-width="1.1"/></svg>
<div class="a" style="left:834px;top:662px;width:122px;height:27px;background:#e1e1e1;border:1px solid #adadad;box-sizing:border-box;"></div>
<div class="t" style="top:665.8px;line-height:19px;font-size:15.40px;color:#000;letter-spacing:-0.33px;left:814.0px;width:162px;text-align:center;transform:scaleX(0.9091);transform-origin:center center;">Exit</div>
<div class="a" style="left:1532px;top:661px;width:123px;height:27px;background:#e1e1e1;border:1px solid #adadad;box-sizing:border-box;"></div>
<div class="t" style="top:664.8px;line-height:19px;font-size:15.40px;color:#000;letter-spacing:-0.33px;left:1512.0px;width:163px;text-align:center;transform:scaleX(0.9091);transform-origin:center center;">File as CSV</div>
<div class="a" style="left:831px;top:695px;width:825px;height:654px;background:#fff;border:1px solid #828790;box-sizing:border-box;"></div>
<div class="a" style="left:914px;top:697px;width:1px;height:30px;background:#e5e5e5;"></div>
<div class="a" style="left:995px;top:697px;width:1px;height:30px;background:#e5e5e5;"></div>
<div class="a" style="left:1077px;top:697px;width:1px;height:30px;background:#e5e5e5;"></div>
<div class="a" style="left:1158px;top:697px;width:1px;height:30px;background:#e5e5e5;"></div>
<div class="a" style="left:1239px;top:697px;width:1px;height:30px;background:#e5e5e5;"></div>
<div class="a" style="left:1321px;top:697px;width:1px;height:30px;background:#e5e5e5;"></div>
<div class="a" style="left:1402px;top:697px;width:1px;height:30px;background:#e5e5e5;"></div>
<div class="a" style="left:1483px;top:697px;width:1px;height:30px;background:#e5e5e5;"></div>
<div class="a" style="left:1564px;top:697px;width:1px;height:30px;background:#e5e5e5;"></div>
<div class="t" style="top:702.3px;line-height:19px;font-size:15.40px;color:#000;letter-spacing:-0.33px;left:841.0px;transform:scaleX(0.9091);transform-origin:left center;">Date</div>
<div class="t" style="top:702.3px;line-height:19px;font-size:15.40px;color:#000;letter-spacing:-0.33px;left:894.5px;width:120px;text-align:center;transform:scaleX(0.9091);transform-origin:center center;">Open</div>
<div class="t" style="top:702.3px;line-height:19px;font-size:15.40px;color:#000;letter-spacing:-0.33px;left:976.0px;width:120px;text-align:center;transform:scaleX(0.9091);transform-origin:center center;">High</div>
<div class="t" style="top:702.3px;line-height:19px;font-size:15.40px;color:#000;letter-spacing:-0.33px;left:1057.5px;width:120px;text-align:center;transform:scaleX(0.9091);transform-origin:center center;">Low</div>
<div class="t" style="top:702.3px;line-height:19px;font-size:15.40px;color:#000;letter-spacing:-0.33px;left:1138.5px;width:120px;text-align:center;transform:scaleX(0.9091);transform-origin:center center;">Close</div>
<div class="t" style="top:702.3px;line-height:19px;font-size:15.40px;color:#000;letter-spacing:-0.33px;left:1220.0px;width:120px;text-align:center;transform:scaleX(0.9091);transform-origin:center center;">Volume</div>
<div class="t" style="top:702.3px;line-height:19px;font-size:15.40px;color:#000;letter-spacing:-0.33px;left:1301.5px;width:120px;text-align:center;transform:scaleX(0.9091);transform-origin:center center;">Adj. Close</div>
<div class="t" style="top:702.3px;line-height:19px;font-size:15.40px;color:#000;letter-spacing:-0.33px;left:1382.5px;width:120px;text-align:center;transform:scaleX(0.9091);transform-origin:center center;">Ratio</div>
<div class="t" style="top:702.3px;line-height:19px;font-size:15.40px;color:#000;letter-spacing:-0.33px;left:1463.5px;width:120px;text-align:center;transform:scaleX(0.9091);transform-origin:center center;">Perf</div>
<div class="t" style="top:702.3px;line-height:19px;font-size:15.40px;color:#000;letter-spacing:-0.33px;left:1544.0px;width:120px;text-align:center;transform:scaleX(0.9091);transform-origin:center center;">Return</div>
<div class="t" style="top:728.4px;line-height:19px;font-size:15.40px;color:#000;letter-spacing:-0.33px;left:841.0px;transform:scaleX(0.9091);transform-origin:left center;">25.11.2016</div>
<div class="t" style="top:728.4px;line-height:19px;font-size:15.40px;color:#000;letter-spacing:-0.33px;left:894.5px;width:120px;text-align:center;transform:scaleX(0.9091);transform-origin:center center;">221,10</div>
<div class="t" style="top:728.4px;line-height:19px;font-size:15.40px;color:#000;letter-spacing:-0.33px;left:976.0px;width:120px;text-align:center;transform:scaleX(0.9091);transform-origin:center center;">221,56</div>
<div class="t" style="top:728.4px;line-height:19px;font-size:15.40px;color:#000;letter-spacing:-0.33px;left:1057.5px;width:120px;text-align:center;transform:scaleX(0.9091);transform-origin:center center;">221,01</div>
<div class="t" style="top:728.4px;line-height:19px;font-size:15.40px;color:#000;letter-spacing:-0.33px;left:1138.5px;width:120px;text-align:center;transform:scaleX(0.9091);transform-origin:center center;">221,52</div>
<div class="t" style="top:728.4px;line-height:19px;font-size:15.40px;color:#000;letter-spacing:-0.33px;left:1220.0px;width:120px;text-align:center;transform:scaleX(0.9091);transform-origin:center center;">3786180...</div>
<div class="t" style="top:728.4px;line-height:19px;font-size:15.40px;color:#000;letter-spacing:-0.33px;left:1301.5px;width:120px;text-align:center;transform:scaleX(0.9091);transform-origin:center center;">221,52</div>
<div class="t" style="top:728.4px;line-height:19px;font-size:15.40px;color:#000;letter-spacing:-0.33px;left:1382.5px;width:120px;text-align:center;transform:scaleX(0.9091);transform-origin:center center;">1,004</div>
<div class="t" style="top:728.4px;line-height:19px;font-size:15.40px;color:#000;letter-spacing:-0.33px;left:1463.5px;width:120px;text-align:center;transform:scaleX(0.9091);transform-origin:center center;">0,372</div>
<div class="t" style="top:728.4px;line-height:19px;font-size:15.40px;color:#000;letter-spacing:-0.33px;left:1545.0px;width:120px;text-align:center;transform:scaleX(0.9091);transform-origin:center center;">376,695</div>
<div class="t" style="top:749.6px;line-height:19px;font-size:15.40px;color:#000;letter-spacing:-0.33px;left:841.0px;transform:scaleX(0.9091);transform-origin:left center;">23.11.2016</div>
<div class="t" style="top:749.6px;line-height:19px;font-size:15.40px;color:#000;letter-spacing:-0.33px;left:894.5px;width:120px;text-align:center;transform:scaleX(0.9091);transform-origin:center center;">219,98</div>
<div class="t" style="top:749.6px;line-height:19px;font-size:15.40px;color:#000;letter-spacing:-0.33px;left:976.0px;width:120px;text-align:center;transform:scaleX(0.9091);transform-origin:center center;">220,76</div>
<div class="t" style="top:749.6px;line-height:19px;font-size:15.40px;color:#000;letter-spacing:-0.33px;left:1057.5px;width:120px;text-align:center;transform:scaleX(0.9091);transform-origin:center center;">219,75</div>
<div class="t" style="top:749.6px;line-height:19px;font-size:15.40px;color:#000;letter-spacing:-0.33px;left:1138.5px;width:120px;text-align:center;transform:scaleX(0.9091);transform-origin:center center;">220,70</div>
<div class="t" style="top:749.6px;line-height:19px;font-size:15.40px;color:#000;letter-spacing:-0.33px;left:1220.0px;width:120px;text-align:center;transform:scaleX(0.9091);transform-origin:center center;">5469010...</div>
<div class="t" style="top:749.6px;line-height:19px;font-size:15.40px;color:#000;letter-spacing:-0.33px;left:1301.5px;width:120px;text-align:center;transform:scaleX(0.9091);transform-origin:center center;">220,70</div>
<div class="t" style="top:749.6px;line-height:19px;font-size:15.40px;color:#000;letter-spacing:-0.33px;left:1382.5px;width:120px;text-align:center;transform:scaleX(0.9091);transform-origin:center center;">1,001</div>
<div class="t" style="top:749.6px;line-height:19px;font-size:15.40px;color:#000;letter-spacing:-0.33px;left:1463.5px;width:120px;text-align:center;transform:scaleX(0.9091);transform-origin:center center;">0,054</div>
<div class="t" style="top:749.6px;line-height:19px;font-size:15.40px;color:#000;letter-spacing:-0.33px;left:1545.0px;width:120px;text-align:center;transform:scaleX(0.9091);transform-origin:center center;">374,930</div>
<div class="t" style="top:770.9px;line-height:19px;font-size:15.40px;color:#000;letter-spacing:-0.33px;left:841.0px;transform:scaleX(0.9091);transform-origin:left center;">22.11.2016</div>
<div class="t" style="top:770.9px;line-height:19px;font-size:15.40px;color:#000;letter-spacing:-0.33px;left:894.5px;width:120px;text-align:center;transform:scaleX(0.9091);transform-origin:center center;">220,51</div>
<div class="t" style="top:770.9px;line-height:19px;font-size:15.40px;color:#000;letter-spacing:-0.33px;left:976.0px;width:120px;text-align:center;transform:scaleX(0.9091);transform-origin:center center;">220,79</div>
<div class="t" style="top:770.9px;line-height:19px;font-size:15.40px;color:#000;letter-spacing:-0.33px;left:1057.5px;width:120px;text-align:center;transform:scaleX(0.9091);transform-origin:center center;">219,73</div>
<div class="t" style="top:770.9px;line-height:19px;font-size:15.40px;color:#000;letter-spacing:-0.33px;left:1138.5px;width:120px;text-align:center;transform:scaleX(0.9091);transform-origin:center center;">220,58</div>
<div class="t" style="top:770.9px;line-height:19px;font-size:15.40px;color:#000;letter-spacing:-0.33px;left:1220.0px;width:120px;text-align:center;transform:scaleX(0.9091);transform-origin:center center;">6533860...</div>
<div class="t" style="top:770.9px;line-height:19px;font-size:15.40px;color:#000;letter-spacing:-0.33px;left:1301.5px;width:120px;text-align:center;transform:scaleX(0.9091);transform-origin:center center;">220,58</div>
<div class="t" style="top:770.9px;line-height:19px;font-size:15.40px;color:#000;letter-spacing:-0.33px;left:1382.5px;width:120px;text-align:center;transform:scaleX(0.9091);transform-origin:center center;">1,002</div>
<div class="t" style="top:770.9px;line-height:19px;font-size:15.40px;color:#000;letter-spacing:-0.33px;left:1463.5px;width:120px;text-align:center;transform:scaleX(0.9091);transform-origin:center center;">0,195</div>
<div class="t" style="top:770.9px;line-height:19px;font-size:15.40px;color:#000;letter-spacing:-0.33px;left:1545.0px;width:120px;text-align:center;transform:scaleX(0.9091);transform-origin:center center;">374,672</div>
<div class="t" style="top:792.1px;line-height:19px;font-size:15.40px;color:#000;letter-spacing:-0.33px;left:841.0px;transform:scaleX(0.9091);transform-origin:left center;">21.11.2016</div>
<div class="t" style="top:792.1px;line-height:19px;font-size:15.40px;color:#000;letter-spacing:-0.33px;left:894.5px;width:120px;text-align:center;transform:scaleX(0.9091);transform-origin:center center;">219,17</div>
<div class="t" style="top:792.1px;line-height:19px;font-size:15.40px;color:#000;letter-spacing:-0.33px;left:976.0px;width:120px;text-align:center;transform:scaleX(0.9091);transform-origin:center center;">220,18</div>
<div class="t" style="top:792.1px;line-height:19px;font-size:15.40px;color:#000;letter-spacing:-0.33px;left:1057.5px;width:120px;text-align:center;transform:scaleX(0.9091);transform-origin:center center;">219,00</div>
<div class="t" style="top:792.1px;line-height:19px;font-size:15.40px;color:#000;letter-spacing:-0.33px;left:1138.5px;width:120px;text-align:center;transform:scaleX(0.9091);transform-origin:center center;">220,15</div>
<div class="t" style="top:792.1px;line-height:19px;font-size:15.40px;color:#000;letter-spacing:-0.33px;left:1220.0px;width:120px;text-align:center;transform:scaleX(0.9091);transform-origin:center center;">6942920...</div>
<div class="t" style="top:792.1px;line-height:19px;font-size:15.40px;color:#000;letter-spacing:-0.33px;left:1301.5px;width:120px;text-align:center;transform:scaleX(0.9091);transform-origin:center center;">220,15</div>
<div class="t" style="top:792.1px;line-height:19px;font-size:15.40px;color:#000;letter-spacing:-0.33px;left:1382.5px;width:120px;text-align:center;transform:scaleX(0.9091);transform-origin:center center;">1,008</div>
<div class="t" style="top:792.1px;line-height:19px;font-size:15.40px;color:#000;letter-spacing:-0.33px;left:1463.5px;width:120px;text-align:center;transform:scaleX(0.9091);transform-origin:center center;">0,755</div>
<div class="t" style="top:792.1px;line-height:19px;font-size:15.40px;color:#000;letter-spacing:-0.33px;left:1545.0px;width:120px;text-align:center;transform:scaleX(0.9091);transform-origin:center center;">373,747</div>
<div class="t" style="top:813.3px;line-height:19px;font-size:15.40px;color:#000;letter-spacing:-0.33px;left:841.0px;transform:scaleX(0.9091);transform-origin:left center;">18.11.2016</div>
<div class="t" style="top:813.3px;line-height:19px;font-size:15.40px;color:#000;letter-spacing:-0.33px;left:894.5px;width:120px;text-align:center;transform:scaleX(0.9091);transform-origin:center center;">219,07</div>
<div class="t" style="top:813.3px;line-height:19px;font-size:15.40px;color:#000;letter-spacing:-0.33px;left:976.0px;width:120px;text-align:center;transform:scaleX(0.9091);transform-origin:center center;">219,27</div>
<div class="t" style="top:813.3px;line-height:19px;font-size:15.40px;color:#000;letter-spacing:-0.33px;left:1057.5px;width:120px;text-align:center;transform:scaleX(0.9091);transform-origin:center center;">218,29</div>
<div class="t" style="top:813.3px;line-height:19px;font-size:15.40px;color:#000;letter-spacing:-0.33px;left:1138.5px;width:120px;text-align:center;transform:scaleX(0.9091);transform-origin:center center;">218,50</div>
<div class="t" style="top:813.3px;line-height:19px;font-size:15.40px;color:#000;letter-spacing:-0.33px;left:1220.0px;width:120px;text-align:center;transform:scaleX(0.9091);transform-origin:center center;">8340970...</div>
<div class="t" style="top:813.3px;line-height:19px;font-size:15.40px;color:#000;letter-spacing:-0.33px;left:1301.5px;width:120px;text-align:center;transform:scaleX(0.9091);transform-origin:center center;">218,50</div>
<div class="t" style="top:813.3px;line-height:19px;font-size:15.40px;color:#000;letter-spacing:-0.33px;left:1382.5px;width:120px;text-align:center;transform:scaleX(0.9091);transform-origin:center center;">0,998</div>
<div class="t" style="top:813.3px;line-height:19px;font-size:15.40px;color:#000;letter-spacing:-0.33px;left:1463.5px;width:120px;text-align:center;transform:scaleX(0.9091);transform-origin:center center;">-0,224</div>
<div class="t" style="top:813.3px;line-height:19px;font-size:15.40px;color:#000;letter-spacing:-0.33px;left:1545.0px;width:120px;text-align:center;transform:scaleX(0.9091);transform-origin:center center;">370,196</div>
<div class="t" style="top:834.5px;line-height:19px;font-size:15.40px;color:#000;letter-spacing:-0.33px;left:841.0px;transform:scaleX(0.9091);transform-origin:left center;">17.11.2016</div>
<div class="t" style="top:834.5px;line-height:19px;font-size:15.40px;color:#000;letter-spacing:-0.33px;left:894.5px;width:120px;text-align:center;transform:scaleX(0.9091);transform-origin:center center;">218,05</div>
<div class="t" style="top:834.5px;line-height:19px;font-size:15.40px;color:#000;letter-spacing:-0.33px;left:976.0px;width:120px;text-align:center;transform:scaleX(0.9091);transform-origin:center center;">219,06</div>
<div class="t" style="top:834.5px;line-height:19px;font-size:15.40px;color:#000;letter-spacing:-0.33px;left:1057.5px;width:120px;text-align:center;transform:scaleX(0.9091);transform-origin:center center;">217,92</div>
<div class="t" style="top:834.5px;line-height:19px;font-size:15.40px;color:#000;letter-spacing:-0.33px;left:1138.5px;width:120px;text-align:center;transform:scaleX(0.9091);transform-origin:center center;">218,99</div>
<div class="t" style="top:834.5px;line-height:19px;font-size:15.40px;color:#000;letter-spacing:-0.33px;left:1220.0px;width:120px;text-align:center;transform:scaleX(0.9091);transform-origin:center center;">6719920...</div>
<div class="t" style="top:834.5px;line-height:19px;font-size:15.40px;color:#000;letter-spacing:-0.33px;left:1301.5px;width:120px;text-align:center;transform:scaleX(0.9091);transform-origin:center center;">218,99</div>
<div class="t" style="top:834.5px;line-height:19px;font-size:15.40px;color:#000;letter-spacing:-0.33px;left:1382.5px;width:120px;text-align:center;transform:scaleX(0.9091);transform-origin:center center;">1,005</div>
<div class="t" style="top:834.5px;line-height:19px;font-size:15.40px;color:#000;letter-spacing:-0.33px;left:1463.5px;width:120px;text-align:center;transform:scaleX(0.9091);transform-origin:center center;">0,514</div>
<div class="t" style="top:834.5px;line-height:19px;font-size:15.40px;color:#000;letter-spacing:-0.33px;left:1545.0px;width:120px;text-align:center;transform:scaleX(0.9091);transform-origin:center center;">371,250</div>
<div class="t" style="top:855.8px;line-height:19px;font-size:15.40px;color:#000;letter-spacing:-0.33px;left:841.0px;transform:scaleX(0.9091);transform-origin:left center;">16.11.2016</div>
<div class="t" style="top:855.8px;line-height:19px;font-size:15.40px;color:#000;letter-spacing:-0.33px;left:894.5px;width:120px;text-align:center;transform:scaleX(0.9091);transform-origin:center center;">217,56</div>
<div class="t" style="top:855.8px;line-height:19px;font-size:15.40px;color:#000;letter-spacing:-0.33px;left:976.0px;width:120px;text-align:center;transform:scaleX(0.9091);transform-origin:center center;">218,14</div>
<div class="t" style="top:855.8px;line-height:19px;font-size:15.40px;color:#000;letter-spacing:-0.33px;left:1057.5px;width:120px;text-align:center;transform:scaleX(0.9091);transform-origin:center center;">217,42</div>
<div class="t" style="top:855.8px;line-height:19px;font-size:15.40px;color:#000;letter-spacing:-0.33px;left:1138.5px;width:120px;text-align:center;transform:scaleX(0.9091);transform-origin:center center;">217,87</div>
<div class="t" style="top:855.8px;line-height:19px;font-size:15.40px;color:#000;letter-spacing:-0.33px;left:1220.0px;width:120px;text-align:center;transform:scaleX(0.9091);transform-origin:center center;">6476140...</div>
<div class="t" style="top:855.8px;line-height:19px;font-size:15.40px;color:#000;letter-spacing:-0.33px;left:1301.5px;width:120px;text-align:center;transform:scaleX(0.9091);transform-origin:center center;">217,87</div>
<div class="t" style="top:855.8px;line-height:19px;font-size:15.40px;color:#000;letter-spacing:-0.33px;left:1382.5px;width:120px;text-align:center;transform:scaleX(0.9091);transform-origin:center center;">0,998</div>
<div class="t" style="top:855.8px;line-height:19px;font-size:15.40px;color:#000;letter-spacing:-0.33px;left:1463.5px;width:120px;text-align:center;transform:scaleX(0.9091);transform-origin:center center;">-0,188</div>
<div class="t" style="top:855.8px;line-height:19px;font-size:15.40px;color:#000;letter-spacing:-0.33px;left:1545.0px;width:120px;text-align:center;transform:scaleX(0.9091);transform-origin:center center;">368,840</div>
<div class="t" style="top:877.0px;line-height:19px;font-size:15.40px;color:#000;letter-spacing:-0.33px;left:841.0px;transform:scaleX(0.9091);transform-origin:left center;">15.11.2016</div>
<div class="t" style="top:877.0px;line-height:19px;font-size:15.40px;color:#000;letter-spacing:-0.33px;left:894.5px;width:120px;text-align:center;transform:scaleX(0.9091);transform-origin:center center;">217,04</div>
<div class="t" style="top:877.0px;line-height:19px;font-size:15.40px;color:#000;letter-spacing:-0.33px;left:976.0px;width:120px;text-align:center;transform:scaleX(0.9091);transform-origin:center center;">218,28</div>
<div class="t" style="top:877.0px;line-height:19px;font-size:15.40px;color:#000;letter-spacing:-0.33px;left:1057.5px;width:120px;text-align:center;transform:scaleX(0.9091);transform-origin:center center;">216,80</div>
<div class="t" style="top:877.0px;line-height:19px;font-size:15.40px;color:#000;letter-spacing:-0.33px;left:1138.5px;width:120px;text-align:center;transform:scaleX(0.9091);transform-origin:center center;">218,28</div>
<div class="t" style="top:877.0px;line-height:19px;font-size:15.40px;color:#000;letter-spacing:-0.33px;left:1220.0px;width:120px;text-align:center;transform:scaleX(0.9091);transform-origin:center center;">8640280...</div>
<div class="t" style="top:877.0px;line-height:19px;font-size:15.40px;color:#000;letter-spacing:-0.33px;left:1301.5px;width:120px;text-align:center;transform:scaleX(0.9091);transform-origin:center center;">218,28</div>
<div class="t" style="top:877.0px;line-height:19px;font-size:15.40px;color:#000;letter-spacing:-0.33px;left:1382.5px;width:120px;text-align:center;transform:scaleX(0.9091);transform-origin:center center;">1,008</div>
<div class="t" style="top:877.0px;line-height:19px;font-size:15.40px;color:#000;letter-spacing:-0.33px;left:1463.5px;width:120px;text-align:center;transform:scaleX(0.9091);transform-origin:center center;">0,780</div>
<div class="t" style="top:877.0px;line-height:19px;font-size:15.40px;color:#000;letter-spacing:-0.33px;left:1545.0px;width:120px;text-align:center;transform:scaleX(0.9091);transform-origin:center center;">369,722</div>
<div class="t" style="top:898.2px;line-height:19px;font-size:15.40px;color:#000;letter-spacing:-0.33px;left:841.0px;transform:scaleX(0.9091);transform-origin:left center;">14.11.2016</div>
<div class="t" style="top:898.2px;line-height:19px;font-size:15.40px;color:#000;letter-spacing:-0.33px;left:894.5px;width:120px;text-align:center;transform:scaleX(0.9091);transform-origin:center center;">217,03</div>
<div class="t" style="top:898.2px;line-height:19px;font-size:15.40px;color:#000;letter-spacing:-0.33px;left:976.0px;width:120px;text-align:center;transform:scaleX(0.9091);transform-origin:center center;">217,27</div>
<div class="t" style="top:898.2px;line-height:19px;font-size:15.40px;color:#000;letter-spacing:-0.33px;left:1057.5px;width:120px;text-align:center;transform:scaleX(0.9091);transform-origin:center center;">215,72</div>
<div class="t" style="top:898.2px;line-height:19px;font-size:15.40px;color:#000;letter-spacing:-0.33px;left:1138.5px;width:120px;text-align:center;transform:scaleX(0.9091);transform-origin:center center;">216,59</div>
<div class="t" style="top:898.2px;line-height:19px;font-size:15.40px;color:#000;letter-spacing:-0.33px;left:1220.0px;width:120px;text-align:center;transform:scaleX(0.9091);transform-origin:center center;">9186100...</div>
<div class="t" style="top:898.2px;line-height:19px;font-size:15.40px;color:#000;letter-spacing:-0.33px;left:1301.5px;width:120px;text-align:center;transform:scaleX(0.9091);transform-origin:center center;">216,59</div>
<div class="t" style="top:898.2px;line-height:19px;font-size:15.40px;color:#000;letter-spacing:-0.33px;left:1382.5px;width:120px;text-align:center;transform:scaleX(0.9091);transform-origin:center center;">1,001</div>
<div class="t" style="top:898.2px;line-height:19px;font-size:15.40px;color:#000;letter-spacing:-0.33px;left:1463.5px;width:120px;text-align:center;transform:scaleX(0.9091);transform-origin:center center;">0,079</div>
<div class="t" style="top:898.2px;line-height:19px;font-size:15.40px;color:#000;letter-spacing:-0.33px;left:1545.0px;width:120px;text-align:center;transform:scaleX(0.9091);transform-origin:center center;">366,086</div>
<div class="t" style="top:919.5px;line-height:19px;font-size:15.40px;color:#000;letter-spacing:-0.33px;left:841.0px;transform:scaleX(0.9091);transform-origin:left center;">11.11.2016</div>
<div class="t" style="top:919.5px;line-height:19px;font-size:15.40px;color:#000;letter-spacing:-0.33px;left:894.5px;width:120px;text-align:center;transform:scaleX(0.9091);transform-origin:center center;">216,08</div>
<div class="t" style="top:919.5px;line-height:19px;font-size:15.40px;color:#000;letter-spacing:-0.33px;left:976.0px;width:120px;text-align:center;transform:scaleX(0.9091);transform-origin:center center;">216,70</div>
<div class="t" style="top:919.5px;line-height:19px;font-size:15.40px;color:#000;letter-spacing:-0.33px;left:1057.5px;width:120px;text-align:center;transform:scaleX(0.9091);transform-origin:center center;">215,32</div>
<div class="t" style="top:919.5px;line-height:19px;font-size:15.40px;color:#000;letter-spacing:-0.33px;left:1138.5px;width:120px;text-align:center;transform:scaleX(0.9091);transform-origin:center center;">216,42</div>
<div class="t" style="top:919.5px;line-height:19px;font-size:15.40px;color:#000;letter-spacing:-0.33px;left:1220.0px;width:120px;text-align:center;transform:scaleX(0.9091);transform-origin:center center;">9384720...</div>
<div class="t" style="top:919.5px;line-height:19px;font-size:15.40px;color:#000;letter-spacing:-0.33px;left:1301.5px;width:120px;text-align:center;transform:scaleX(0.9091);transform-origin:center center;">216,42</div>
<div class="t" style="top:919.5px;line-height:19px;font-size:15.40px;color:#000;letter-spacing:-0.33px;left:1382.5px;width:120px;text-align:center;transform:scaleX(0.9091);transform-origin:center center;">0,998</div>
<div class="t" style="top:919.5px;line-height:19px;font-size:15.40px;color:#000;letter-spacing:-0.33px;left:1463.5px;width:120px;text-align:center;transform:scaleX(0.9091);transform-origin:center center;">-0,230</div>
<div class="t" style="top:919.5px;line-height:19px;font-size:15.40px;color:#000;letter-spacing:-0.33px;left:1545.0px;width:120px;text-align:center;transform:scaleX(0.9091);transform-origin:center center;">365,720</div>
<div class="t" style="top:940.7px;line-height:19px;font-size:15.40px;color:#000;letter-spacing:-0.33px;left:841.0px;transform:scaleX(0.9091);transform-origin:left center;">10.11.2016</div>
<div class="t" style="top:940.7px;line-height:19px;font-size:15.40px;color:#000;letter-spacing:-0.33px;left:894.5px;width:120px;text-align:center;transform:scaleX(0.9091);transform-origin:center center;">217,30</div>
<div class="t" style="top:940.7px;line-height:19px;font-size:15.40px;color:#000;letter-spacing:-0.33px;left:976.0px;width:120px;text-align:center;transform:scaleX(0.9091);transform-origin:center center;">218,31</div>
<div class="t" style="top:940.7px;line-height:19px;font-size:15.40px;color:#000;letter-spacing:-0.33px;left:1057.5px;width:120px;text-align:center;transform:scaleX(0.9091);transform-origin:center center;">215,22</div>
<div class="t" style="top:940.7px;line-height:19px;font-size:15.40px;color:#000;letter-spacing:-0.33px;left:1138.5px;width:120px;text-align:center;transform:scaleX(0.9091);transform-origin:center center;">216,92</div>
<div class="t" style="top:940.7px;line-height:19px;font-size:15.40px;color:#000;letter-spacing:-0.33px;left:1220.0px;width:120px;text-align:center;transform:scaleX(0.9091);transform-origin:center center;">1719862...</div>
<div class="t" style="top:940.7px;line-height:19px;font-size:15.40px;color:#000;letter-spacing:-0.33px;left:1301.5px;width:120px;text-align:center;transform:scaleX(0.9091);transform-origin:center center;">216,92</div>
<div class="t" style="top:940.7px;line-height:19px;font-size:15.40px;color:#000;letter-spacing:-0.33px;left:1382.5px;width:120px;text-align:center;transform:scaleX(0.9091);transform-origin:center center;">1,002</div>
<div class="t" style="top:940.7px;line-height:19px;font-size:15.40px;color:#000;letter-spacing:-0.33px;left:1463.5px;width:120px;text-align:center;transform:scaleX(0.9091);transform-origin:center center;">0,250</div>
<div class="t" style="top:940.7px;line-height:19px;font-size:15.40px;color:#000;letter-spacing:-0.33px;left:1545.0px;width:120px;text-align:center;transform:scaleX(0.9091);transform-origin:center center;">366,796</div>
<div class="t" style="top:961.9px;line-height:19px;font-size:15.40px;color:#000;letter-spacing:-0.33px;left:841.0px;transform:scaleX(0.9091);transform-origin:left center;">09.11.2016</div>
<div class="t" style="top:961.9px;line-height:19px;font-size:15.40px;color:#000;letter-spacing:-0.33px;left:894.5px;width:120px;text-align:center;transform:scaleX(0.9091);transform-origin:center center;">212,37</div>
<div class="t" style="top:961.9px;line-height:19px;font-size:15.40px;color:#000;letter-spacing:-0.33px;left:976.0px;width:120px;text-align:center;transform:scaleX(0.9091);transform-origin:center center;">217,10</div>
<div class="t" style="top:961.9px;line-height:19px;font-size:15.40px;color:#000;letter-spacing:-0.33px;left:1057.5px;width:120px;text-align:center;transform:scaleX(0.9091);transform-origin:center center;">212,34</div>
<div class="t" style="top:961.9px;line-height:19px;font-size:15.40px;color:#000;letter-spacing:-0.33px;left:1138.5px;width:120px;text-align:center;transform:scaleX(0.9091);transform-origin:center center;">216,38</div>
<div class="t" style="top:961.9px;line-height:19px;font-size:15.40px;color:#000;letter-spacing:-0.33px;left:1220.0px;width:120px;text-align:center;transform:scaleX(0.9091);transform-origin:center center;">2490964...</div>
<div class="t" style="top:961.9px;line-height:19px;font-size:15.40px;color:#000;letter-spacing:-0.33px;left:1301.5px;width:120px;text-align:center;transform:scaleX(0.9091);transform-origin:center center;">216,38</div>
<div class="t" style="top:961.9px;line-height:19px;font-size:15.40px;color:#000;letter-spacing:-0.33px;left:1382.5px;width:120px;text-align:center;transform:scaleX(0.9091);transform-origin:center center;">1,011</div>
<div class="t" style="top:961.9px;line-height:19px;font-size:15.40px;color:#000;letter-spacing:-0.33px;left:1463.5px;width:120px;text-align:center;transform:scaleX(0.9091);transform-origin:center center;">1,060</div>
<div class="t" style="top:961.9px;line-height:19px;font-size:15.40px;color:#000;letter-spacing:-0.33px;left:1545.0px;width:120px;text-align:center;transform:scaleX(0.9091);transform-origin:center center;">365,634</div>
<div class="t" style="top:983.2px;line-height:19px;font-size:15.40px;color:#000;letter-spacing:-0.33px;left:841.0px;transform:scaleX(0.9091);transform-origin:left center;">08.11.2016</div>
<div class="t" style="top:983.2px;line-height:19px;font-size:15.40px;color:#000;letter-spacing:-0.33px;left:894.5px;width:120px;text-align:center;transform:scaleX(0.9091);transform-origin:center center;">212,69</div>
<div class="t" style="top:983.2px;line-height:19px;font-size:15.40px;color:#000;letter-spacing:-0.33px;left:976.0px;width:120px;text-align:center;transform:scaleX(0.9091);transform-origin:center center;">214,77</div>
<div class="t" style="top:983.2px;line-height:19px;font-size:15.40px;color:#000;letter-spacing:-0.33px;left:1057.5px;width:120px;text-align:center;transform:scaleX(0.9091);transform-origin:center center;">212,38</div>
<div class="t" style="top:983.2px;line-height:19px;font-size:15.40px;color:#000;letter-spacing:-0.33px;left:1138.5px;width:120px;text-align:center;transform:scaleX(0.9091);transform-origin:center center;">214,11</div>
<div class="t" style="top:983.2px;line-height:19px;font-size:15.40px;color:#000;letter-spacing:-0.33px;left:1220.0px;width:120px;text-align:center;transform:scaleX(0.9091);transform-origin:center center;">1022683...</div>
<div class="t" style="top:983.2px;line-height:19px;font-size:15.40px;color:#000;letter-spacing:-0.33px;left:1301.5px;width:120px;text-align:center;transform:scaleX(0.9091);transform-origin:center center;">214,11</div>
<div class="t" style="top:983.2px;line-height:19px;font-size:15.40px;color:#000;letter-spacing:-0.33px;left:1382.5px;width:120px;text-align:center;transform:scaleX(0.9091);transform-origin:center center;">1,005</div>
<div class="t" style="top:983.2px;line-height:19px;font-size:15.40px;color:#000;letter-spacing:-0.33px;left:1463.5px;width:120px;text-align:center;transform:scaleX(0.9091);transform-origin:center center;">0,450</div>
<div class="t" style="top:983.2px;line-height:19px;font-size:15.40px;color:#000;letter-spacing:-0.33px;left:1545.0px;width:120px;text-align:center;transform:scaleX(0.9091);transform-origin:center center;">360,749</div>
<div class="t" style="top:1004.4px;line-height:19px;font-size:15.40px;color:#000;letter-spacing:-0.33px;left:841.0px;transform:scaleX(0.9091);transform-origin:left center;">07.11.2016</div>
<div class="t" style="top:1004.4px;line-height:19px;font-size:15.40px;color:#000;letter-spacing:-0.33px;left:894.5px;width:120px;text-align:center;transform:scaleX(0.9091);transform-origin:center center;">208,55</div>
<div class="t" style="top:1004.4px;line-height:19px;font-size:15.40px;color:#000;letter-spacing:-0.33px;left:976.0px;width:120px;text-align:center;transform:scaleX(0.9091);transform-origin:center center;">213,19</div>
<div class="t" style="top:1004.4px;line-height:19px;font-size:15.40px;color:#000;letter-spacing:-0.33px;left:1057.5px;width:120px;text-align:center;transform:scaleX(0.9091);transform-origin:center center;">208,55</div>
<div class="t" style="top:1004.4px;line-height:19px;font-size:15.40px;color:#000;letter-spacing:-0.33px;left:1138.5px;width:120px;text-align:center;transform:scaleX(0.9091);transform-origin:center center;">213,15</div>
<div class="t" style="top:1004.4px;line-height:19px;font-size:15.40px;color:#000;letter-spacing:-0.33px;left:1220.0px;width:120px;text-align:center;transform:scaleX(0.9091);transform-origin:center center;">1097949...</div>
<div class="t" style="top:1004.4px;line-height:19px;font-size:15.40px;color:#000;letter-spacing:-0.33px;left:1301.5px;width:120px;text-align:center;transform:scaleX(0.9091);transform-origin:center center;">213,15</div>
<div class="t" style="top:1004.4px;line-height:19px;font-size:15.40px;color:#000;letter-spacing:-0.33px;left:1382.5px;width:120px;text-align:center;transform:scaleX(0.9091);transform-origin:center center;">1,022</div>
<div class="t" style="top:1004.4px;line-height:19px;font-size:15.40px;color:#000;letter-spacing:-0.33px;left:1463.5px;width:120px;text-align:center;transform:scaleX(0.9091);transform-origin:center center;">2,206</div>
<div class="t" style="top:1004.4px;line-height:19px;font-size:15.40px;color:#000;letter-spacing:-0.33px;left:1545.0px;width:120px;text-align:center;transform:scaleX(0.9091);transform-origin:center center;">358,683</div>
<div class="t" style="top:1025.6px;line-height:19px;font-size:15.40px;color:#000;letter-spacing:-0.33px;left:841.0px;transform:scaleX(0.9091);transform-origin:left center;">04.11.2016</div>
<div class="t" style="top:1025.6px;line-height:19px;font-size:15.40px;color:#000;letter-spacing:-0.33px;left:894.5px;width:120px;text-align:center;transform:scaleX(0.9091);transform-origin:center center;">208,91</div>
<div class="t" style="top:1025.6px;line-height:19px;font-size:15.40px;color:#000;letter-spacing:-0.33px;left:976.0px;width:120px;text-align:center;transform:scaleX(0.9091);transform-origin:center center;">209,89</div>
<div class="t" style="top:1025.6px;line-height:19px;font-size:15.40px;color:#000;letter-spacing:-0.33px;left:1057.5px;width:120px;text-align:center;transform:scaleX(0.9091);transform-origin:center center;">208,38</div>
<div class="t" style="top:1025.6px;line-height:19px;font-size:15.40px;color:#000;letter-spacing:-0.33px;left:1138.5px;width:120px;text-align:center;transform:scaleX(0.9091);transform-origin:center center;">208,55</div>
<div class="t" style="top:1025.6px;line-height:19px;font-size:15.40px;color:#000;letter-spacing:-0.33px;left:1220.0px;width:120px;text-align:center;transform:scaleX(0.9091);transform-origin:center center;">1091221...</div>
<div class="t" style="top:1025.6px;line-height:19px;font-size:15.40px;color:#000;letter-spacing:-0.33px;left:1301.5px;width:120px;text-align:center;transform:scaleX(0.9091);transform-origin:center center;">208,55</div>
<div class="t" style="top:1025.6px;line-height:19px;font-size:15.40px;color:#000;letter-spacing:-0.33px;left:1382.5px;width:120px;text-align:center;transform:scaleX(0.9091);transform-origin:center center;">0,999</div>
<div class="t" style="top:1025.6px;line-height:19px;font-size:15.40px;color:#000;letter-spacing:-0.33px;left:1463.5px;width:120px;text-align:center;transform:scaleX(0.9091);transform-origin:center center;">-0,110</div>
<div class="t" style="top:1025.6px;line-height:19px;font-size:15.40px;color:#000;letter-spacing:-0.33px;left:1545.0px;width:120px;text-align:center;transform:scaleX(0.9091);transform-origin:center center;">348,784</div>
<div class="t" style="top:1046.8px;line-height:19px;font-size:15.40px;color:#000;letter-spacing:-0.33px;left:841.0px;transform:scaleX(0.9091);transform-origin:left center;">03.11.2016</div>
<div class="t" style="top:1046.8px;line-height:19px;font-size:15.40px;color:#000;letter-spacing:-0.33px;left:894.5px;width:120px;text-align:center;transform:scaleX(0.9091);transform-origin:center center;">209,99</div>
<div class="t" style="top:1046.8px;line-height:19px;font-size:15.40px;color:#000;letter-spacing:-0.33px;left:976.0px;width:120px;text-align:center;transform:scaleX(0.9091);transform-origin:center center;">210,24</div>
<div class="t" style="top:1046.8px;line-height:19px;font-size:15.40px;color:#000;letter-spacing:-0.33px;left:1057.5px;width:120px;text-align:center;transform:scaleX(0.9091);transform-origin:center center;">208,46</div>
<div class="t" style="top:1046.8px;line-height:19px;font-size:15.40px;color:#000;letter-spacing:-0.33px;left:1138.5px;width:120px;text-align:center;transform:scaleX(0.9091);transform-origin:center center;">208,78</div>
<div class="t" style="top:1046.8px;line-height:19px;font-size:15.40px;color:#000;letter-spacing:-0.33px;left:1220.0px;width:120px;text-align:center;transform:scaleX(0.9091);transform-origin:center center;">8893930...</div>
<div class="t" style="top:1046.8px;line-height:19px;font-size:15.40px;color:#000;letter-spacing:-0.33px;left:1301.5px;width:120px;text-align:center;transform:scaleX(0.9091);transform-origin:center center;">208,78</div>
<div class="t" style="top:1046.8px;line-height:19px;font-size:15.40px;color:#000;letter-spacing:-0.33px;left:1382.5px;width:120px;text-align:center;transform:scaleX(0.9091);transform-origin:center center;">0,995</div>
<div class="t" style="top:1046.8px;line-height:19px;font-size:15.40px;color:#000;letter-spacing:-0.33px;left:1463.5px;width:120px;text-align:center;transform:scaleX(0.9091);transform-origin:center center;">-0,458</div>
<div class="t" style="top:1046.8px;line-height:19px;font-size:15.40px;color:#000;letter-spacing:-0.33px;left:1545.0px;width:120px;text-align:center;transform:scaleX(0.9091);transform-origin:center center;">349,279</div>
<div class="t" style="top:1068.1px;line-height:19px;font-size:15.40px;color:#000;letter-spacing:-0.33px;left:841.0px;transform:scaleX(0.9091);transform-origin:left center;">02.11.2016</div>
<div class="t" style="top:1068.1px;line-height:19px;font-size:15.40px;color:#000;letter-spacing:-0.33px;left:894.5px;width:120px;text-align:center;transform:scaleX(0.9091);transform-origin:center center;">210,65</div>
<div class="t" style="top:1068.1px;line-height:19px;font-size:15.40px;color:#000;letter-spacing:-0.33px;left:976.0px;width:120px;text-align:center;transform:scaleX(0.9091);transform-origin:center center;">211,10</div>
<div class="t" style="top:1068.1px;line-height:19px;font-size:15.40px;color:#000;letter-spacing:-0.33px;left:1057.5px;width:120px;text-align:center;transform:scaleX(0.9091);transform-origin:center center;">209,23</div>
<div class="t" style="top:1068.1px;line-height:19px;font-size:15.40px;color:#000;letter-spacing:-0.33px;left:1138.5px;width:120px;text-align:center;transform:scaleX(0.9091);transform-origin:center center;">209,74</div>
<div class="t" style="top:1068.1px;line-height:19px;font-size:15.40px;color:#000;letter-spacing:-0.33px;left:1220.0px;width:120px;text-align:center;transform:scaleX(0.9091);transform-origin:center center;">1033308...</div>
<div class="t" style="top:1068.1px;line-height:19px;font-size:15.40px;color:#000;letter-spacing:-0.33px;left:1301.5px;width:120px;text-align:center;transform:scaleX(0.9091);transform-origin:center center;">209,74</div>
<div class="t" style="top:1068.1px;line-height:19px;font-size:15.40px;color:#000;letter-spacing:-0.33px;left:1382.5px;width:120px;text-align:center;transform:scaleX(0.9091);transform-origin:center center;">0,994</div>
<div class="t" style="top:1068.1px;line-height:19px;font-size:15.40px;color:#000;letter-spacing:-0.33px;left:1463.5px;width:120px;text-align:center;transform:scaleX(0.9091);transform-origin:center center;">-0,602</div>
<div class="t" style="top:1068.1px;line-height:19px;font-size:15.40px;color:#000;letter-spacing:-0.33px;left:1545.0px;width:120px;text-align:center;transform:scaleX(0.9091);transform-origin:center center;">351,345</div>
<div class="t" style="top:1089.3px;line-height:19px;font-size:15.40px;color:#000;letter-spacing:-0.33px;left:841.0px;transform:scaleX(0.9091);transform-origin:left center;">01.11.2016</div>
<div class="t" style="top:1089.3px;line-height:19px;font-size:15.40px;color:#000;letter-spacing:-0.33px;left:894.5px;width:120px;text-align:center;transform:scaleX(0.9091);transform-origin:center center;">212,93</div>
<div class="t" style="top:1089.3px;line-height:19px;font-size:15.40px;color:#000;letter-spacing:-0.33px;left:976.0px;width:120px;text-align:center;transform:scaleX(0.9091);transform-origin:center center;">212,99</div>
<div class="t" style="top:1089.3px;line-height:19px;font-size:15.40px;color:#000;letter-spacing:-0.33px;left:1057.5px;width:120px;text-align:center;transform:scaleX(0.9091);transform-origin:center center;">209,60</div>
<div class="t" style="top:1089.3px;line-height:19px;font-size:15.40px;color:#000;letter-spacing:-0.33px;left:1138.5px;width:120px;text-align:center;transform:scaleX(0.9091);transform-origin:center center;">211,01</div>
<div class="t" style="top:1089.3px;line-height:19px;font-size:15.40px;color:#000;letter-spacing:-0.33px;left:1220.0px;width:120px;text-align:center;transform:scaleX(0.9091);transform-origin:center center;">1227818...</div>
<div class="t" style="top:1089.3px;line-height:19px;font-size:15.40px;color:#000;letter-spacing:-0.33px;left:1301.5px;width:120px;text-align:center;transform:scaleX(0.9091);transform-origin:center center;">211,01</div>
<div class="t" style="top:1089.3px;line-height:19px;font-size:15.40px;color:#000;letter-spacing:-0.33px;left:1382.5px;width:120px;text-align:center;transform:scaleX(0.9091);transform-origin:center center;">0,993</div>
<div class="t" style="top:1089.3px;line-height:19px;font-size:15.40px;color:#000;letter-spacing:-0.33px;left:1463.5px;width:120px;text-align:center;transform:scaleX(0.9091);transform-origin:center center;">-0,725</div>
<div class="t" style="top:1089.3px;line-height:19px;font-size:15.40px;color:#000;letter-spacing:-0.33px;left:1545.0px;width:120px;text-align:center;transform:scaleX(0.9091);transform-origin:center center;">354,078</div>
<div class="t" style="top:1110.5px;line-height:19px;font-size:15.40px;color:#000;letter-spacing:-0.33px;left:841.0px;transform:scaleX(0.9091);transform-origin:left center;">31.10.2016</div>
<div class="t" style="top:1110.5px;line-height:19px;font-size:15.40px;color:#000;letter-spacing:-0.33px;left:894.5px;width:120px;text-align:center;transform:scaleX(0.9091);transform-origin:center center;">212,93</div>
<div class="t" style="top:1110.5px;line-height:19px;font-size:15.40px;color:#000;letter-spacing:-0.33px;left:976.0px;width:120px;text-align:center;transform:scaleX(0.9091);transform-origin:center center;">213,19</div>
<div class="t" style="top:1110.5px;line-height:19px;font-size:15.40px;color:#000;letter-spacing:-0.33px;left:1057.5px;width:120px;text-align:center;transform:scaleX(0.9091);transform-origin:center center;">212,36</div>
<div class="t" style="top:1110.5px;line-height:19px;font-size:15.40px;color:#000;letter-spacing:-0.33px;left:1138.5px;width:120px;text-align:center;transform:scaleX(0.9091);transform-origin:center center;">212,55</div>
<div class="t" style="top:1110.5px;line-height:19px;font-size:15.40px;color:#000;letter-spacing:-0.33px;left:1220.0px;width:120px;text-align:center;transform:scaleX(0.9091);transform-origin:center center;">6127250...</div>
<div class="t" style="top:1110.5px;line-height:19px;font-size:15.40px;color:#000;letter-spacing:-0.33px;left:1301.5px;width:120px;text-align:center;transform:scaleX(0.9091);transform-origin:center center;">212,55</div>
<div class="t" style="top:1110.5px;line-height:19px;font-size:15.40px;color:#000;letter-spacing:-0.33px;left:1382.5px;width:120px;text-align:center;transform:scaleX(0.9091);transform-origin:center center;">1,000</div>
<div class="t" style="top:1110.5px;line-height:19px;font-size:15.40px;color:#000;letter-spacing:-0.33px;left:1463.5px;width:120px;text-align:center;transform:scaleX(0.9091);transform-origin:center center;">0,005</div>
<div class="t" style="top:1110.5px;line-height:19px;font-size:15.40px;color:#000;letter-spacing:-0.33px;left:1545.0px;width:120px;text-align:center;transform:scaleX(0.9091);transform-origin:center center;">357,392</div>
<div class="t" style="top:1131.8px;line-height:19px;font-size:15.40px;color:#000;letter-spacing:-0.33px;left:841.0px;transform:scaleX(0.9091);transform-origin:left center;">28.10.2016</div>
<div class="t" style="top:1131.8px;line-height:19px;font-size:15.40px;color:#000;letter-spacing:-0.33px;left:894.5px;width:120px;text-align:center;transform:scaleX(0.9091);transform-origin:center center;">213,14</div>
<div class="t" style="top:1131.8px;line-height:19px;font-size:15.40px;color:#000;letter-spacing:-0.33px;left:976.0px;width:120px;text-align:center;transform:scaleX(0.9091);transform-origin:center center;">213,93</div>
<div class="t" style="top:1131.8px;line-height:19px;font-size:15.40px;color:#000;letter-spacing:-0.33px;left:1057.5px;width:120px;text-align:center;transform:scaleX(0.9091);transform-origin:center center;">211,71</div>
<div class="t" style="top:1131.8px;line-height:19px;font-size:15.40px;color:#000;letter-spacing:-0.33px;left:1138.5px;width:120px;text-align:center;transform:scaleX(0.9091);transform-origin:center center;">212,54</div>
<div class="t" style="top:1131.8px;line-height:19px;font-size:15.40px;color:#000;letter-spacing:-0.33px;left:1220.0px;width:120px;text-align:center;transform:scaleX(0.9091);transform-origin:center center;">1406232...</div>
<div class="t" style="top:1131.8px;line-height:19px;font-size:15.40px;color:#000;letter-spacing:-0.33px;left:1301.5px;width:120px;text-align:center;transform:scaleX(0.9091);transform-origin:center center;">212,54</div>
<div class="t" style="top:1131.8px;line-height:19px;font-size:15.40px;color:#000;letter-spacing:-0.33px;left:1382.5px;width:120px;text-align:center;transform:scaleX(0.9091);transform-origin:center center;">0,997</div>
<div class="t" style="top:1131.8px;line-height:19px;font-size:15.40px;color:#000;letter-spacing:-0.33px;left:1463.5px;width:120px;text-align:center;transform:scaleX(0.9091);transform-origin:center center;">-0,296</div>
<div class="t" style="top:1131.8px;line-height:19px;font-size:15.40px;color:#000;letter-spacing:-0.33px;left:1545.0px;width:120px;text-align:center;transform:scaleX(0.9091);transform-origin:center center;">357,370</div>
<div class="t" style="top:1153.0px;line-height:19px;font-size:15.40px;color:#000;letter-spacing:-0.33px;left:841.0px;transform:scaleX(0.9091);transform-origin:left center;">27.10.2016</div>
<div class="t" style="top:1153.0px;line-height:19px;font-size:15.40px;color:#000;letter-spacing:-0.33px;left:894.5px;width:120px;text-align:center;transform:scaleX(0.9091);transform-origin:center center;">214,58</div>
<div class="t" style="top:1153.0px;line-height:19px;font-size:15.40px;color:#000;letter-spacing:-0.33px;left:976.0px;width:120px;text-align:center;transform:scaleX(0.9091);transform-origin:center center;">214,62</div>
<div class="t" style="top:1153.0px;line-height:19px;font-size:15.40px;color:#000;letter-spacing:-0.33px;left:1057.5px;width:120px;text-align:center;transform:scaleX(0.9091);transform-origin:center center;">213,08</div>
<div class="t" style="top:1153.0px;line-height:19px;font-size:15.40px;color:#000;letter-spacing:-0.33px;left:1138.5px;width:120px;text-align:center;transform:scaleX(0.9091);transform-origin:center center;">213,17</div>
<div class="t" style="top:1153.0px;line-height:19px;font-size:15.40px;color:#000;letter-spacing:-0.33px;left:1220.0px;width:120px;text-align:center;transform:scaleX(0.9091);transform-origin:center center;">7722020...</div>
<div class="t" style="top:1153.0px;line-height:19px;font-size:15.40px;color:#000;letter-spacing:-0.33px;left:1301.5px;width:120px;text-align:center;transform:scaleX(0.9091);transform-origin:center center;">213,17</div>
<div class="t" style="top:1153.0px;line-height:19px;font-size:15.40px;color:#000;letter-spacing:-0.33px;left:1382.5px;width:120px;text-align:center;transform:scaleX(0.9091);transform-origin:center center;">0,997</div>
<div class="t" style="top:1153.0px;line-height:19px;font-size:15.40px;color:#000;letter-spacing:-0.33px;left:1463.5px;width:120px;text-align:center;transform:scaleX(0.9091);transform-origin:center center;">-0,267</div>
<div class="t" style="top:1153.0px;line-height:19px;font-size:15.40px;color:#000;letter-spacing:-0.33px;left:1545.0px;width:120px;text-align:center;transform:scaleX(0.9091);transform-origin:center center;">358,726</div>
<div class="t" style="top:1174.2px;line-height:19px;font-size:15.40px;color:#000;letter-spacing:-0.33px;left:841.0px;transform:scaleX(0.9091);transform-origin:left center;">26.10.2016</div>
<div class="t" style="top:1174.2px;line-height:19px;font-size:15.40px;color:#000;letter-spacing:-0.33px;left:894.5px;width:120px;text-align:center;transform:scaleX(0.9091);transform-origin:center center;">213,21</div>
<div class="t" style="top:1174.2px;line-height:19px;font-size:15.40px;color:#000;letter-spacing:-0.33px;left:976.0px;width:120px;text-align:center;transform:scaleX(0.9091);transform-origin:center center;">214,42</div>
<div class="t" style="top:1174.2px;line-height:19px;font-size:15.40px;color:#000;letter-spacing:-0.33px;left:1057.5px;width:120px;text-align:center;transform:scaleX(0.9091);transform-origin:center center;">212,93</div>
<div class="t" style="top:1174.2px;line-height:19px;font-size:15.40px;color:#000;letter-spacing:-0.33px;left:1138.5px;width:120px;text-align:center;transform:scaleX(0.9091);transform-origin:center center;">213,74</div>
<div class="t" style="top:1174.2px;line-height:19px;font-size:15.40px;color:#000;letter-spacing:-0.33px;left:1220.0px;width:120px;text-align:center;transform:scaleX(0.9091);transform-origin:center center;">7570550...</div>
<div class="t" style="top:1174.2px;line-height:19px;font-size:15.40px;color:#000;letter-spacing:-0.33px;left:1301.5px;width:120px;text-align:center;transform:scaleX(0.9091);transform-origin:center center;">213,74</div>
<div class="t" style="top:1174.2px;line-height:19px;font-size:15.40px;color:#000;letter-spacing:-0.33px;left:1382.5px;width:120px;text-align:center;transform:scaleX(0.9091);transform-origin:center center;">0,998</div>
<div class="t" style="top:1174.2px;line-height:19px;font-size:15.40px;color:#000;letter-spacing:-0.33px;left:1463.5px;width:120px;text-align:center;transform:scaleX(0.9091);transform-origin:center center;">-0,201</div>
<div class="t" style="top:1174.2px;line-height:19px;font-size:15.40px;color:#000;letter-spacing:-0.33px;left:1545.0px;width:120px;text-align:center;transform:scaleX(0.9091);transform-origin:center center;">359,953</div>
<div class="t" style="top:1195.5px;line-height:19px;font-size:15.40px;color:#000;letter-spacing:-0.33px;left:841.0px;transform:scaleX(0.9091);transform-origin:left center;">25.10.2016</div>
<div class="t" style="top:1195.5px;line-height:19px;font-size:15.40px;color:#000;letter-spacing:-0.33px;left:894.5px;width:120px;text-align:center;transform:scaleX(0.9091);transform-origin:center center;">214,68</div>
<div class="t" style="top:1195.5px;line-height:19px;font-size:15.40px;color:#000;letter-spacing:-0.33px;left:976.0px;width:120px;text-align:center;transform:scaleX(0.9091);transform-origin:center center;">214,98</div>
<div class="t" style="top:1195.5px;line-height:19px;font-size:15.40px;color:#000;letter-spacing:-0.33px;left:1057.5px;width:120px;text-align:center;transform:scaleX(0.9091);transform-origin:center center;">213,98</div>
<div class="t" style="top:1195.5px;line-height:19px;font-size:15.40px;color:#000;letter-spacing:-0.33px;left:1138.5px;width:120px;text-align:center;transform:scaleX(0.9091);transform-origin:center center;">214,17</div>
<div class="t" style="top:1195.5px;line-height:19px;font-size:15.40px;color:#000;letter-spacing:-0.33px;left:1220.0px;width:120px;text-align:center;transform:scaleX(0.9091);transform-origin:center center;">6654230...</div>
<div class="t" style="top:1195.5px;line-height:19px;font-size:15.40px;color:#000;letter-spacing:-0.33px;left:1301.5px;width:120px;text-align:center;transform:scaleX(0.9091);transform-origin:center center;">214,17</div>
<div class="t" style="top:1195.5px;line-height:19px;font-size:15.40px;color:#000;letter-spacing:-0.33px;left:1382.5px;width:120px;text-align:center;transform:scaleX(0.9091);transform-origin:center center;">0,997</div>
<div class="t" style="top:1195.5px;line-height:19px;font-size:15.40px;color:#000;letter-spacing:-0.33px;left:1463.5px;width:120px;text-align:center;transform:scaleX(0.9091);transform-origin:center center;">-0,335</div>
<div class="t" style="top:1195.5px;line-height:19px;font-size:15.40px;color:#000;letter-spacing:-0.33px;left:1545.0px;width:120px;text-align:center;transform:scaleX(0.9091);transform-origin:center center;">360,878</div>
<div class="t" style="top:1216.7px;line-height:19px;font-size:15.40px;color:#000;letter-spacing:-0.33px;left:841.0px;transform:scaleX(0.9091);transform-origin:left center;">24.10.2016</div>
<div class="t" style="top:1216.7px;line-height:19px;font-size:15.40px;color:#000;letter-spacing:-0.33px;left:894.5px;width:120px;text-align:center;transform:scaleX(0.9091);transform-origin:center center;">215,00</div>
<div class="t" style="top:1216.7px;line-height:19px;font-size:15.40px;color:#000;letter-spacing:-0.33px;left:976.0px;width:120px;text-align:center;transform:scaleX(0.9091);transform-origin:center center;">215,32</div>
<div class="t" style="top:1216.7px;line-height:19px;font-size:15.40px;color:#000;letter-spacing:-0.33px;left:1057.5px;width:120px;text-align:center;transform:scaleX(0.9091);transform-origin:center center;">214,48</div>
<div class="t" style="top:1216.7px;line-height:19px;font-size:15.40px;color:#000;letter-spacing:-0.33px;left:1138.5px;width:120px;text-align:center;transform:scaleX(0.9091);transform-origin:center center;">214,89</div>
<div class="t" style="top:1216.7px;line-height:19px;font-size:15.40px;color:#000;letter-spacing:-0.33px;left:1220.0px;width:120px;text-align:center;transform:scaleX(0.9091);transform-origin:center center;">6014660...</div>
<div class="t" style="top:1216.7px;line-height:19px;font-size:15.40px;color:#000;letter-spacing:-0.33px;left:1301.5px;width:120px;text-align:center;transform:scaleX(0.9091);transform-origin:center center;">214,89</div>
<div class="t" style="top:1216.7px;line-height:19px;font-size:15.40px;color:#000;letter-spacing:-0.33px;left:1382.5px;width:120px;text-align:center;transform:scaleX(0.9091);transform-origin:center center;">1,004</div>
<div class="t" style="top:1216.7px;line-height:19px;font-size:15.40px;color:#000;letter-spacing:-0.33px;left:1463.5px;width:120px;text-align:center;transform:scaleX(0.9091);transform-origin:center center;">0,425</div>
<div class="t" style="top:1216.7px;line-height:19px;font-size:15.40px;color:#000;letter-spacing:-0.33px;left:1545.0px;width:120px;text-align:center;transform:scaleX(0.9091);transform-origin:center center;">362,427</div>
<div class="t" style="top:1237.9px;line-height:19px;font-size:15.40px;color:#000;letter-spacing:-0.33px;left:841.0px;transform:scaleX(0.9091);transform-origin:left center;">21.10.2016</div>
<div class="t" style="top:1237.9px;line-height:19px;font-size:15.40px;color:#000;letter-spacing:-0.33px;left:894.5px;width:120px;text-align:center;transform:scaleX(0.9091);transform-origin:center center;">213,88</div>
<div class="t" style="top:1237.9px;line-height:19px;font-size:15.40px;color:#000;letter-spacing:-0.33px;left:976.0px;width:120px;text-align:center;transform:scaleX(0.9091);transform-origin:center center;">214,08</div>
<div class="t" style="top:1237.9px;line-height:19px;font-size:15.40px;color:#000;letter-spacing:-0.33px;left:1057.5px;width:120px;text-align:center;transform:scaleX(0.9091);transform-origin:center center;">212,76</div>
<div class="t" style="top:1237.9px;line-height:19px;font-size:15.40px;color:#000;letter-spacing:-0.33px;left:1138.5px;width:120px;text-align:center;transform:scaleX(0.9091);transform-origin:center center;">213,98</div>
<div class="t" style="top:1237.9px;line-height:19px;font-size:15.40px;color:#000;letter-spacing:-0.33px;left:1220.0px;width:120px;text-align:center;transform:scaleX(0.9091);transform-origin:center center;">8908910...</div>
<div class="t" style="top:1237.9px;line-height:19px;font-size:15.40px;color:#000;letter-spacing:-0.33px;left:1301.5px;width:120px;text-align:center;transform:scaleX(0.9091);transform-origin:center center;">213,98</div>
<div class="t" style="top:1237.9px;line-height:19px;font-size:15.40px;color:#000;letter-spacing:-0.33px;left:1382.5px;width:120px;text-align:center;transform:scaleX(0.9091);transform-origin:center center;">1,000</div>
<div class="t" style="top:1237.9px;line-height:19px;font-size:15.40px;color:#000;letter-spacing:-0.33px;left:1463.5px;width:120px;text-align:center;transform:scaleX(0.9091);transform-origin:center center;">0,047</div>
<div class="t" style="top:1237.9px;line-height:19px;font-size:15.40px;color:#000;letter-spacing:-0.33px;left:1545.0px;width:120px;text-align:center;transform:scaleX(0.9091);transform-origin:center center;">360,469</div>
<div class="t" style="top:1259.1px;line-height:19px;font-size:15.40px;color:#000;letter-spacing:-0.33px;left:841.0px;transform:scaleX(0.9091);transform-origin:left center;">20.10.2016</div>
<div class="t" style="top:1259.1px;line-height:19px;font-size:15.40px;color:#000;letter-spacing:-0.33px;left:894.5px;width:120px;text-align:center;transform:scaleX(0.9091);transform-origin:center center;">213,87</div>
<div class="t" style="top:1259.1px;line-height:19px;font-size:15.40px;color:#000;letter-spacing:-0.33px;left:976.0px;width:120px;text-align:center;transform:scaleX(0.9091);transform-origin:center center;">214,53</div>
<div class="t" style="top:1259.1px;line-height:19px;font-size:15.40px;color:#000;letter-spacing:-0.33px;left:1057.5px;width:120px;text-align:center;transform:scaleX(0.9091);transform-origin:center center;">213,11</div>
<div class="t" style="top:1259.1px;line-height:19px;font-size:15.40px;color:#000;letter-spacing:-0.33px;left:1138.5px;width:120px;text-align:center;transform:scaleX(0.9091);transform-origin:center center;">213,88</div>
<div class="t" style="top:1259.1px;line-height:19px;font-size:15.40px;color:#000;letter-spacing:-0.33px;left:1220.0px;width:120px;text-align:center;transform:scaleX(0.9091);transform-origin:center center;">7363980...</div>
<div class="t" style="top:1259.1px;line-height:19px;font-size:15.40px;color:#000;letter-spacing:-0.33px;left:1301.5px;width:120px;text-align:center;transform:scaleX(0.9091);transform-origin:center center;">213,88</div>
<div class="t" style="top:1259.1px;line-height:19px;font-size:15.40px;color:#000;letter-spacing:-0.33px;left:1382.5px;width:120px;text-align:center;transform:scaleX(0.9091);transform-origin:center center;">0,998</div>
<div class="t" style="top:1259.1px;line-height:19px;font-size:15.40px;color:#000;letter-spacing:-0.33px;left:1463.5px;width:120px;text-align:center;transform:scaleX(0.9091);transform-origin:center center;">-0,187</div>
<div class="t" style="top:1259.1px;line-height:19px;font-size:15.40px;color:#000;letter-spacing:-0.33px;left:1545.0px;width:120px;text-align:center;transform:scaleX(0.9091);transform-origin:center center;">360,254</div>
<div class="t" style="top:1280.4px;line-height:19px;font-size:15.40px;color:#000;letter-spacing:-0.33px;left:841.0px;transform:scaleX(0.9091);transform-origin:left center;">19.10.2016</div>
<div class="t" style="top:1280.4px;line-height:19px;font-size:15.40px;color:#000;letter-spacing:-0.33px;left:894.5px;width:120px;text-align:center;transform:scaleX(0.9091);transform-origin:center center;">214,02</div>
<div class="t" style="top:1280.4px;line-height:19px;font-size:15.40px;color:#000;letter-spacing:-0.33px;left:976.0px;width:120px;text-align:center;transform:scaleX(0.9091);transform-origin:center center;">214,64</div>
<div class="t" style="top:1280.4px;line-height:19px;font-size:15.40px;color:#000;letter-spacing:-0.33px;left:1057.5px;width:120px;text-align:center;transform:scaleX(0.9091);transform-origin:center center;">213,60</div>
<div class="t" style="top:1280.4px;line-height:19px;font-size:15.40px;color:#000;letter-spacing:-0.33px;left:1138.5px;width:120px;text-align:center;transform:scaleX(0.9091);transform-origin:center center;">214,28</div>
<div class="t" style="top:1280.4px;line-height:19px;font-size:15.40px;color:#000;letter-spacing:-0.33px;left:1220.0px;width:120px;text-align:center;transform:scaleX(0.9091);transform-origin:center center;">6651920...</div>
<div class="t" style="top:1280.4px;line-height:19px;font-size:15.40px;color:#000;letter-spacing:-0.33px;left:1301.5px;width:120px;text-align:center;transform:scaleX(0.9091);transform-origin:center center;">214,28</div>
<div class="t" style="top:1280.4px;line-height:19px;font-size:15.40px;color:#000;letter-spacing:-0.33px;left:1382.5px;width:120px;text-align:center;transform:scaleX(0.9091);transform-origin:center center;">1,003</div>
<div class="t" style="top:1280.4px;line-height:19px;font-size:15.40px;color:#000;letter-spacing:-0.33px;left:1463.5px;width:120px;text-align:center;transform:scaleX(0.9091);transform-origin:center center;">0,267</div>
<div class="t" style="top:1280.4px;line-height:19px;font-size:15.40px;color:#000;letter-spacing:-0.33px;left:1545.0px;width:120px;text-align:center;transform:scaleX(0.9091);transform-origin:center center;">361,115</div>
<div class="t" style="top:1301.6px;line-height:19px;font-size:15.40px;color:#000;letter-spacing:-0.33px;left:841.0px;transform:scaleX(0.9091);transform-origin:left center;">18.10.2016</div>
<div class="t" style="top:1301.6px;line-height:19px;font-size:15.40px;color:#000;letter-spacing:-0.33px;left:894.5px;width:120px;text-align:center;transform:scaleX(0.9091);transform-origin:center center;">214,24</div>
<div class="t" style="top:1301.6px;line-height:19px;font-size:15.40px;color:#000;letter-spacing:-0.33px;left:976.0px;width:120px;text-align:center;transform:scaleX(0.9091);transform-origin:center center;">214,31</div>
<div class="t" style="top:1301.6px;line-height:19px;font-size:15.40px;color:#000;letter-spacing:-0.33px;left:1057.5px;width:120px;text-align:center;transform:scaleX(0.9091);transform-origin:center center;">213,27</div>
<div class="t" style="top:1301.6px;line-height:19px;font-size:15.40px;color:#000;letter-spacing:-0.33px;left:1138.5px;width:120px;text-align:center;transform:scaleX(0.9091);transform-origin:center center;">213,71</div>
<div class="t" style="top:1301.6px;line-height:19px;font-size:15.40px;color:#000;letter-spacing:-0.33px;left:1220.0px;width:120px;text-align:center;transform:scaleX(0.9091);transform-origin:center center;">7686970...</div>
<div class="t" style="top:1301.6px;line-height:19px;font-size:15.40px;color:#000;letter-spacing:-0.33px;left:1301.5px;width:120px;text-align:center;transform:scaleX(0.9091);transform-origin:center center;">213,71</div>
<div class="t" style="top:1301.6px;line-height:19px;font-size:15.40px;color:#000;letter-spacing:-0.33px;left:1382.5px;width:120px;text-align:center;transform:scaleX(0.9091);transform-origin:center center;">1,006</div>
<div class="t" style="top:1301.6px;line-height:19px;font-size:15.40px;color:#000;letter-spacing:-0.33px;left:1463.5px;width:120px;text-align:center;transform:scaleX(0.9091);transform-origin:center center;">0,626</div>
<div class="t" style="top:1301.6px;line-height:19px;font-size:15.40px;color:#000;letter-spacing:-0.33px;left:1545.0px;width:120px;text-align:center;transform:scaleX(0.9091);transform-origin:center center;">359,888</div>
<div class="a" style="left:1634px;top:697px;width:21px;height:651px;background:#f0f0f0;"></div>
<svg class="a" style="left:1637px;top:703px" width="14" height="12"><polyline points="2.5,8 7,3.5 11.5,8" fill="none" stroke="#555" stroke-width="2"/></svg>
<div class="a" style="left:1635px;top:719px;width:17px;height:21px;background:#cdcdcd;"></div>
<svg class="a" style="left:1636px;top:1310px" width="14" height="12"><polyline points="2.5,3 7,7.5 11.5,3" fill="none" stroke="#555" stroke-width="2"/></svg>
<div class="a" style="left:832px;top:1327px;width:802px;height:21px;background:#f0f0f0;"></div>
<svg class="a" style="left:836px;top:1329px" width="14" height="14"><polyline points="9,3 5,7 9,11" fill="none" stroke="#555" stroke-width="1.8"/></svg>
<div class="a" style="left:855px;top:1329px;width:743px;height:15px;background:#cdcdcd;"></div>
<svg class="a" style="left:1615px;top:1329px" width="14" height="14"><polyline points="5,3 9,7 5,11" fill="none" stroke="#555" stroke-width="1.8"/></svg>
<div class="a" style="left:920px;top:42px;width:1px;height:815px;background:#1a1aa0;"></div>
<div class="t" style="left:717px;top:1329px;font-family:'Liberation Serif',serif;font-style:italic;font-size:35px;line-height:40px;letter-spacing:2.8px;color:#ea2a30;-webkit-text-stroke:0.5px #ea2a30;text-shadow:0 0 3px #fff,0 0 2px #fff;">www.forex-warez.com, andreybbrv@gmail.com, Skype: andreybbrv</div>
</body></html>
